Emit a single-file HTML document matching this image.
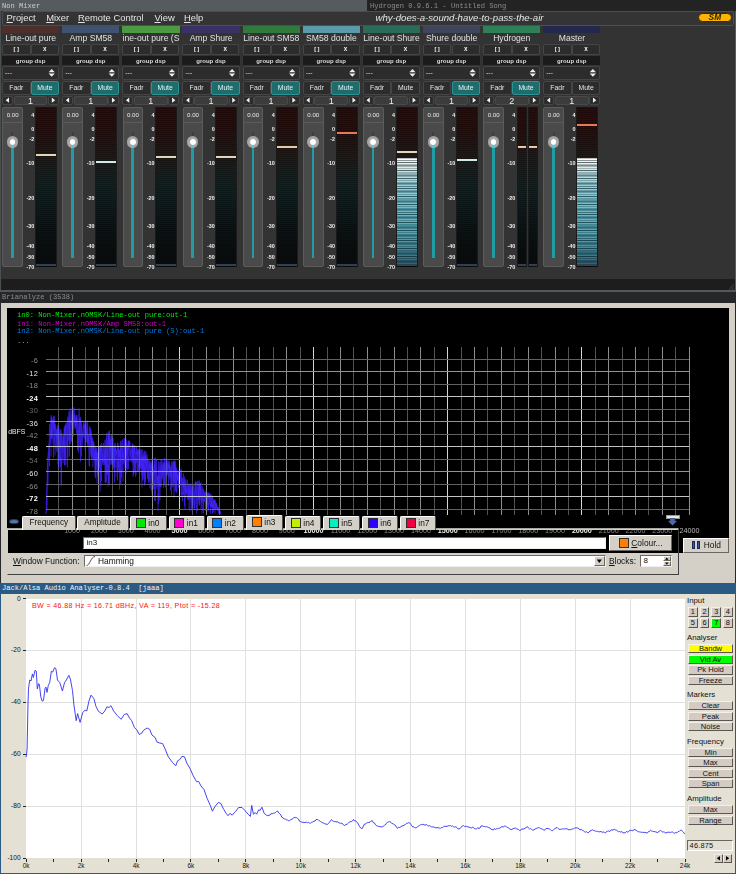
<!DOCTYPE html>
<html><head><meta charset="utf-8"><title>screenshot</title><style>
html,body{margin:0;padding:0;background:#333;}
body{width:736px;height:874px;position:relative;overflow:hidden;font-family:"Liberation Sans",sans-serif;}
div{position:absolute;box-sizing:border-box;white-space:nowrap;}
svg{position:absolute;left:0;top:0;overflow:visible;}
.t{line-height:1;}
.m{font-family:"Liberation Mono",monospace;font-size:7.1px;line-height:1;}
.m2{font-family:"Liberation Mono",monospace;font-size:7.2px;line-height:1;}
.c{text-align:center;line-height:1;overflow:hidden;}
.sb{background:#2c2c2c;border:1px solid #454545;border-radius:2px;}
.jb{background:#d4ccc4;border-top:1px solid #f4f0e8;border-left:1px solid #f4f0e8;border-bottom:1px solid #5a5650;border-right:1px solid #5a5650;text-align:center;font-size:7.6px;line-height:7.5px;color:#111;}
.jl{font-size:7.8px;color:#111;line-height:1;}
.bt{background:#d4d0c8;border-top:1px solid #fff;border-left:1px solid #fff;border-bottom:1px solid #6a6660;border-right:1px solid #6a6660;}
</style></head><body>
<div style="left:0px;top:0px;width:367px;height:11px;background:#565b5d;"></div>
<div style="left:367px;top:0px;width:369px;height:11px;background:#232324;"></div>
<div class="m" style="left:2px;top:2.5px;color:#c9cdd0;">Non Mixer</div>
<div class="m" style="left:370px;top:2.5px;color:#8a8d90;">Hydrogen 0.9.6.1 - Untitled Song</div>
<div style="left:0px;top:11px;width:736px;height:268px;background:#333333;"></div>
<div style="left:0px;top:11px;width:1.4px;height:280px;background:#4a4f52;"></div>
<div style="left:0px;top:279px;width:736px;height:11px;background:#1d1d1d;"></div>
<div style="left:0px;top:279px;width:1.4px;height:12px;background:#4a4f52;"></div>
<div style="left:734.6px;top:11px;width:1.4px;height:280px;background:#545e62;"></div>
<svg width="736" height="300"><path d="M729 289.6 L733.6 284 M731 289.8 L733.8 286.4 M732.8 289.9 L733.9 288.5" stroke="#505050" stroke-width="0.7" fill="none"/></svg>
<div style="left:2px;top:11px;width:732.3px;height:14.6px;background:#343434;border:1px solid #4e4e4e;border-radius:2px;"></div>
<div class="t" style="left:6.5px;top:13.2px;font-size:9.4px;color:#e4e4e4;"><u>P</u>roject</div>
<div class="t" style="left:46.2px;top:13.2px;font-size:9.4px;color:#e4e4e4;"><u>M</u>ixer</div>
<div class="t" style="left:78px;top:13.2px;font-size:9.4px;color:#e4e4e4;"><u>R</u>emote Control</div>
<div class="t" style="left:154.5px;top:13.2px;font-size:9.4px;color:#e4e4e4;"><u>V</u>iew</div>
<div class="t" style="left:184px;top:13.2px;font-size:9.4px;color:#e4e4e4;"><u>H</u>elp</div>
<div class="t" style="left:375.5px;top:13.2px;font-size:9.6px;font-style:italic;color:#e8e8e8;">why-does-a-sound-have-to-pass-the-air</div>
<div style="left:697.7px;top:13.4px;width:34.7px;height:8.7px;background:#fdb400;border-radius:4.5px;border:0.6px solid #3a2a00;font-size:8.3px;font-weight:bold;font-style:italic;color:#2a2200;text-align:center;line-height:7.8px;letter-spacing:0.4px;">SM</div>
<div style="left:2.0px;top:26px;width:57.3px;height:6.8px;background:#4d302b;"></div>
<div class="c" style="left:2.0px;top:33.6px;width:57.5px;height:10px;font-size:8.6px;color:#e2e2e2;">Line-out pure</div>
<div class="sb" style="left:2.0px;top:44px;width:28.5px;height:10.5px;font-size:5.8px;font-weight:bold;color:#f0f0f0;line-height:8.6px;text-align:center;letter-spacing:1.4px;text-indent:1.4px;">[]</div>
<div class="sb" style="left:30.7px;top:44px;width:28.3px;height:10.5px;font-size:6.3px;font-weight:bold;color:#f0f0f0;line-height:8px;text-align:center;">x</div>
<div style="left:2.0px;top:56px;width:57.2px;height:9px;background:#1b1b1b;"></div>
<div class="c" style="left:2.0px;top:56px;width:57.2px;height:9px;font-size:6.05px;font-weight:bold;color:#dcdcdc;line-height:10.3px;">group dsp</div>
<div class="sb" style="left:2.0px;top:66px;width:57.2px;height:14px;"></div>
<div class="t" style="left:5.0px;top:69.1px;font-size:7px;color:#ddd;">---</div>
<svg width="736" height="300"><path d="M48.6 72.2 l3.1 -3.3 l3.1 3.3 z M48.6 73.4 l3.1 3.3 l3.1 -3.3 z" fill="#f0f0f0"/></svg>
<div class="sb" style="left:2.0px;top:81px;width:28.5px;height:14px;font-size:6.85px;color:#e4e4e4;line-height:12px;text-align:center;">Fadr</div>
<div style="left:30.7px;top:81px;width:28.5px;height:14px;background:#1e6c6c;border:1px solid #2a9494;border-radius:2px;font-size:6.85px;color:#e4f4f4;line-height:12px;text-align:center;">Mute</div>
<div class="sb" style="left:2.0px;top:95.7px;width:11.2px;height:9.3px;"></div>
<div style="left:13.7px;top:95.7px;width:33.8px;height:9.3px;background:#3c3c3c;border:1px solid #4a4a4a;border-radius:2px;font-size:9px;color:#eee;line-height:8.5px;text-align:center;">1</div>
<div class="sb" style="left:48.2px;top:95.7px;width:10.8px;height:9.3px;"></div>
<svg width="736" height="300"><path d="M9.0 97.6 l0 5.2 l-3.3 -2.6 z M51.8 97.6 l0 5.2 l3.3 -2.6 z" fill="#f0f0f0"/></svg>
<div style="left:2.3px;top:107px;width:20.6px;height:159.5px;background:#4a4a4a;border:1px solid #5c5c5c;border-radius:2px;"></div>
<div style="left:2.3px;top:107px;width:20.6px;height:16px;background:#4a4a4a;border:1px solid #5c5c5c;border-radius:2px;font-size:6.1px;color:#e8e8e8;line-height:14.5px;text-align:center;">0.00</div>
<div style="left:11.1px;top:144px;width:2.6px;height:114px;background:#1f9ca4;"></div>
<div style="left:11.4px;top:132.2px;width:2px;height:3.6px;background:#3e3e3e;"></div>
<div style="left:6.7px;top:136.4px;width:11.4px;height:11.4px;border-radius:50%;background:radial-gradient(circle,#b4b4b4 0%,#a6a6a6 55%,#8c8c8c 100%);"></div>
<div style="left:11.1px;top:143.5px;width:2.6px;height:4px;background:rgba(90,200,210,0.75);"></div>
<div style="left:9.5px;top:139.2px;width:5.8px;height:5.8px;border-radius:50%;background:radial-gradient(circle,#fff 0%,#fff 60%,rgba(255,255,255,0) 100%);"></div>
<div class="t" style="right:701.7px;top:113.1px;font-size:5.4px;font-weight:bold;color:#f0f0f0;">4</div>
<div class="t" style="right:701.7px;top:126.79999999999998px;font-size:5.4px;font-weight:bold;color:#f0f0f0;">0</div>
<div class="t" style="right:701.7px;top:137.1px;font-size:5.4px;font-weight:bold;color:#f0f0f0;">-2</div>
<div class="t" style="right:701.7px;top:161.1px;font-size:5.4px;font-weight:bold;color:#f0f0f0;">-10</div>
<div class="t" style="right:701.7px;top:196.1px;font-size:5.4px;font-weight:bold;color:#f0f0f0;">-20</div>
<div class="t" style="right:701.7px;top:223.79999999999998px;font-size:5.4px;font-weight:bold;color:#f0f0f0;">-30</div>
<div class="t" style="right:701.7px;top:244.29999999999998px;font-size:5.4px;font-weight:bold;color:#f0f0f0;">-40</div>
<div class="t" style="right:701.7px;top:255.1px;font-size:5.4px;font-weight:bold;color:#f0f0f0;">-50</div>
<div class="t" style="right:701.7px;top:265.1px;font-size:5.4px;font-weight:bold;color:#f0f0f0;">-70</div>
<div style="left:35.0px;top:107px;width:22px;height:159.5px;background:linear-gradient(to bottom,#2c0c0c 0%,#2a0e0e 14%,#241414 22%,#221a18 30%,#1a1e1e 38%,#102222 50%,#0e1c1e 62%,#0c1416 75%,#0a0e0f 90%,#0a0c0d 100%);border-left:1px solid #1a1a1a;border-right:1px solid #1a1a1a;"></div>
<div style="left:36.0px;top:107px;width:20px;height:157px;background:repeating-linear-gradient(to bottom,rgba(0,0,0,0) 0px,rgba(0,0,0,0) 1px,rgba(0,0,0,0.25) 1px,rgba(0,0,0,0.25) 2px);"></div>
<div style="left:36.0px;top:264px;width:20px;height:2px;background:#304050;"></div>
<div style="left:36.0px;top:153.5px;width:20px;height:2px;background:#ddd6b8;"></div>
<div style="left:62.13px;top:26px;width:57.3px;height:6.8px;background:#3f5370;"></div>
<div class="c" style="left:62.13px;top:33.6px;width:57.5px;height:10px;font-size:8.6px;color:#e2e2e2;">Amp SM58</div>
<div class="sb" style="left:62.13px;top:44px;width:28.5px;height:10.5px;font-size:5.8px;font-weight:bold;color:#f0f0f0;line-height:8.6px;text-align:center;letter-spacing:1.4px;text-indent:1.4px;">[]</div>
<div class="sb" style="left:90.83px;top:44px;width:28.3px;height:10.5px;font-size:6.3px;font-weight:bold;color:#f0f0f0;line-height:8px;text-align:center;">x</div>
<div style="left:62.13px;top:56px;width:57.2px;height:9px;background:#1b1b1b;"></div>
<div class="c" style="left:62.13px;top:56px;width:57.2px;height:9px;font-size:6.05px;font-weight:bold;color:#dcdcdc;line-height:10.3px;">group dsp</div>
<div class="sb" style="left:62.13px;top:66px;width:57.2px;height:14px;"></div>
<div class="t" style="left:65.13px;top:69.1px;font-size:7px;color:#ddd;">---</div>
<svg width="736" height="300"><path d="M108.73 72.2 l3.1 -3.3 l3.1 3.3 z M108.73 73.4 l3.1 3.3 l3.1 -3.3 z" fill="#f0f0f0"/></svg>
<div class="sb" style="left:62.13px;top:81px;width:28.5px;height:14px;font-size:6.85px;color:#e4e4e4;line-height:12px;text-align:center;">Fadr</div>
<div style="left:90.83px;top:81px;width:28.5px;height:14px;background:#1e6c6c;border:1px solid #2a9494;border-radius:2px;font-size:6.85px;color:#e4f4f4;line-height:12px;text-align:center;">Mute</div>
<div class="sb" style="left:62.13px;top:95.7px;width:11.2px;height:9.3px;"></div>
<div style="left:73.83px;top:95.7px;width:33.8px;height:9.3px;background:#3c3c3c;border:1px solid #4a4a4a;border-radius:2px;font-size:9px;color:#eee;line-height:8.5px;text-align:center;">1</div>
<div class="sb" style="left:108.33000000000001px;top:95.7px;width:10.8px;height:9.3px;"></div>
<svg width="736" height="300"><path d="M69.13 97.6 l0 5.2 l-3.3 -2.6 z M111.93 97.6 l0 5.2 l3.3 -2.6 z" fill="#f0f0f0"/></svg>
<div style="left:62.43px;top:107px;width:20.6px;height:159.5px;background:#4a4a4a;border:1px solid #5c5c5c;border-radius:2px;"></div>
<div style="left:62.43px;top:107px;width:20.6px;height:16px;background:#4a4a4a;border:1px solid #5c5c5c;border-radius:2px;font-size:6.1px;color:#e8e8e8;line-height:14.5px;text-align:center;">0.00</div>
<div style="left:71.23px;top:144px;width:2.6px;height:114px;background:#1f9ca4;"></div>
<div style="left:71.53px;top:132.2px;width:2px;height:3.6px;background:#3e3e3e;"></div>
<div style="left:66.83px;top:136.4px;width:11.4px;height:11.4px;border-radius:50%;background:radial-gradient(circle,#b4b4b4 0%,#a6a6a6 55%,#8c8c8c 100%);"></div>
<div style="left:71.23px;top:143.5px;width:2.6px;height:4px;background:rgba(90,200,210,0.75);"></div>
<div style="left:69.63px;top:139.2px;width:5.8px;height:5.8px;border-radius:50%;background:radial-gradient(circle,#fff 0%,#fff 60%,rgba(255,255,255,0) 100%);"></div>
<div class="t" style="right:641.5699999999999px;top:113.1px;font-size:5.4px;font-weight:bold;color:#f0f0f0;">4</div>
<div class="t" style="right:641.5699999999999px;top:126.79999999999998px;font-size:5.4px;font-weight:bold;color:#f0f0f0;">0</div>
<div class="t" style="right:641.5699999999999px;top:137.1px;font-size:5.4px;font-weight:bold;color:#f0f0f0;">-2</div>
<div class="t" style="right:641.5699999999999px;top:161.1px;font-size:5.4px;font-weight:bold;color:#f0f0f0;">-10</div>
<div class="t" style="right:641.5699999999999px;top:196.1px;font-size:5.4px;font-weight:bold;color:#f0f0f0;">-20</div>
<div class="t" style="right:641.5699999999999px;top:223.79999999999998px;font-size:5.4px;font-weight:bold;color:#f0f0f0;">-30</div>
<div class="t" style="right:641.5699999999999px;top:244.29999999999998px;font-size:5.4px;font-weight:bold;color:#f0f0f0;">-40</div>
<div class="t" style="right:641.5699999999999px;top:255.1px;font-size:5.4px;font-weight:bold;color:#f0f0f0;">-50</div>
<div class="t" style="right:641.5699999999999px;top:265.1px;font-size:5.4px;font-weight:bold;color:#f0f0f0;">-70</div>
<div style="left:95.13px;top:107px;width:22px;height:159.5px;background:linear-gradient(to bottom,#2c0c0c 0%,#2a0e0e 14%,#241414 22%,#221a18 30%,#1a1e1e 38%,#102222 50%,#0e1c1e 62%,#0c1416 75%,#0a0e0f 90%,#0a0c0d 100%);border-left:1px solid #1a1a1a;border-right:1px solid #1a1a1a;"></div>
<div style="left:96.13px;top:107px;width:20px;height:157px;background:repeating-linear-gradient(to bottom,rgba(0,0,0,0) 0px,rgba(0,0,0,0) 1px,rgba(0,0,0,0.25) 1px,rgba(0,0,0,0.25) 2px);"></div>
<div style="left:96.13px;top:264px;width:20px;height:2px;background:#304050;"></div>
<div style="left:96.13px;top:160.5px;width:20px;height:2px;background:#cfeaea;"></div>
<div style="left:122.26px;top:26px;width:57.3px;height:6.8px;background:#4c9a44;"></div>
<div class="c" style="left:122.26px;top:33.6px;width:57.5px;height:10px;font-size:8.6px;color:#e2e2e2;">ine-out pure (S</div>
<div class="sb" style="left:122.26px;top:44px;width:28.5px;height:10.5px;font-size:5.8px;font-weight:bold;color:#f0f0f0;line-height:8.6px;text-align:center;letter-spacing:1.4px;text-indent:1.4px;">[]</div>
<div class="sb" style="left:150.96px;top:44px;width:28.3px;height:10.5px;font-size:6.3px;font-weight:bold;color:#f0f0f0;line-height:8px;text-align:center;">x</div>
<div style="left:122.26px;top:56px;width:57.2px;height:9px;background:#1b1b1b;"></div>
<div class="c" style="left:122.26px;top:56px;width:57.2px;height:9px;font-size:6.05px;font-weight:bold;color:#dcdcdc;line-height:10.3px;">group dsp</div>
<div class="sb" style="left:122.26px;top:66px;width:57.2px;height:14px;"></div>
<div class="t" style="left:125.26px;top:69.1px;font-size:7px;color:#ddd;">---</div>
<svg width="736" height="300"><path d="M168.86 72.2 l3.1 -3.3 l3.1 3.3 z M168.86 73.4 l3.1 3.3 l3.1 -3.3 z" fill="#f0f0f0"/></svg>
<div class="sb" style="left:122.26px;top:81px;width:28.5px;height:14px;font-size:6.85px;color:#e4e4e4;line-height:12px;text-align:center;">Fadr</div>
<div style="left:150.96px;top:81px;width:28.5px;height:14px;background:#1e6c6c;border:1px solid #2a9494;border-radius:2px;font-size:6.85px;color:#e4f4f4;line-height:12px;text-align:center;">Mute</div>
<div class="sb" style="left:122.26px;top:95.7px;width:11.2px;height:9.3px;"></div>
<div style="left:133.96px;top:95.7px;width:33.8px;height:9.3px;background:#3c3c3c;border:1px solid #4a4a4a;border-radius:2px;font-size:9px;color:#eee;line-height:8.5px;text-align:center;">1</div>
<div class="sb" style="left:168.46px;top:95.7px;width:10.8px;height:9.3px;"></div>
<svg width="736" height="300"><path d="M129.26 97.6 l0 5.2 l-3.3 -2.6 z M172.06 97.6 l0 5.2 l3.3 -2.6 z" fill="#f0f0f0"/></svg>
<div style="left:122.56px;top:107px;width:20.6px;height:159.5px;background:#4a4a4a;border:1px solid #5c5c5c;border-radius:2px;"></div>
<div style="left:122.56px;top:107px;width:20.6px;height:16px;background:#4a4a4a;border:1px solid #5c5c5c;border-radius:2px;font-size:6.1px;color:#e8e8e8;line-height:14.5px;text-align:center;">0.00</div>
<div style="left:131.36px;top:144px;width:2.6px;height:114px;background:#1f9ca4;"></div>
<div style="left:131.66px;top:132.2px;width:2px;height:3.6px;background:#3e3e3e;"></div>
<div style="left:126.96000000000001px;top:136.4px;width:11.4px;height:11.4px;border-radius:50%;background:radial-gradient(circle,#b4b4b4 0%,#a6a6a6 55%,#8c8c8c 100%);"></div>
<div style="left:131.36px;top:143.5px;width:2.6px;height:4px;background:rgba(90,200,210,0.75);"></div>
<div style="left:129.76px;top:139.2px;width:5.8px;height:5.8px;border-radius:50%;background:radial-gradient(circle,#fff 0%,#fff 60%,rgba(255,255,255,0) 100%);"></div>
<div class="t" style="right:581.44px;top:113.1px;font-size:5.4px;font-weight:bold;color:#f0f0f0;">4</div>
<div class="t" style="right:581.44px;top:126.79999999999998px;font-size:5.4px;font-weight:bold;color:#f0f0f0;">0</div>
<div class="t" style="right:581.44px;top:137.1px;font-size:5.4px;font-weight:bold;color:#f0f0f0;">-2</div>
<div class="t" style="right:581.44px;top:161.1px;font-size:5.4px;font-weight:bold;color:#f0f0f0;">-10</div>
<div class="t" style="right:581.44px;top:196.1px;font-size:5.4px;font-weight:bold;color:#f0f0f0;">-20</div>
<div class="t" style="right:581.44px;top:223.79999999999998px;font-size:5.4px;font-weight:bold;color:#f0f0f0;">-30</div>
<div class="t" style="right:581.44px;top:244.29999999999998px;font-size:5.4px;font-weight:bold;color:#f0f0f0;">-40</div>
<div class="t" style="right:581.44px;top:255.1px;font-size:5.4px;font-weight:bold;color:#f0f0f0;">-50</div>
<div class="t" style="right:581.44px;top:265.1px;font-size:5.4px;font-weight:bold;color:#f0f0f0;">-70</div>
<div style="left:155.26px;top:107px;width:22px;height:159.5px;background:linear-gradient(to bottom,#2c0c0c 0%,#2a0e0e 14%,#241414 22%,#221a18 30%,#1a1e1e 38%,#102222 50%,#0e1c1e 62%,#0c1416 75%,#0a0e0f 90%,#0a0c0d 100%);border-left:1px solid #1a1a1a;border-right:1px solid #1a1a1a;"></div>
<div style="left:156.26px;top:107px;width:20px;height:157px;background:repeating-linear-gradient(to bottom,rgba(0,0,0,0) 0px,rgba(0,0,0,0) 1px,rgba(0,0,0,0.25) 1px,rgba(0,0,0,0.25) 2px);"></div>
<div style="left:156.26px;top:264px;width:20px;height:2px;background:#304050;"></div>
<div style="left:156.26px;top:155.5px;width:20px;height:2px;background:#ddd6b8;"></div>
<div style="left:182.39px;top:26px;width:57.3px;height:6.8px;background:#3a3166;"></div>
<div class="c" style="left:182.39px;top:33.6px;width:57.5px;height:10px;font-size:8.6px;color:#e2e2e2;">Amp Shure</div>
<div class="sb" style="left:182.39px;top:44px;width:28.5px;height:10.5px;font-size:5.8px;font-weight:bold;color:#f0f0f0;line-height:8.6px;text-align:center;letter-spacing:1.4px;text-indent:1.4px;">[]</div>
<div class="sb" style="left:211.08999999999997px;top:44px;width:28.3px;height:10.5px;font-size:6.3px;font-weight:bold;color:#f0f0f0;line-height:8px;text-align:center;">x</div>
<div style="left:182.39px;top:56px;width:57.2px;height:9px;background:#1b1b1b;"></div>
<div class="c" style="left:182.39px;top:56px;width:57.2px;height:9px;font-size:6.05px;font-weight:bold;color:#dcdcdc;line-height:10.3px;">group dsp</div>
<div class="sb" style="left:182.39px;top:66px;width:57.2px;height:14px;"></div>
<div class="t" style="left:185.39px;top:69.1px;font-size:7px;color:#ddd;">---</div>
<svg width="736" height="300"><path d="M228.98999999999998 72.2 l3.1 -3.3 l3.1 3.3 z M228.98999999999998 73.4 l3.1 3.3 l3.1 -3.3 z" fill="#f0f0f0"/></svg>
<div class="sb" style="left:182.39px;top:81px;width:28.5px;height:14px;font-size:6.85px;color:#e4e4e4;line-height:12px;text-align:center;">Fadr</div>
<div style="left:211.08999999999997px;top:81px;width:28.5px;height:14px;background:#1e6c6c;border:1px solid #2a9494;border-radius:2px;font-size:6.85px;color:#e4f4f4;line-height:12px;text-align:center;">Mute</div>
<div class="sb" style="left:182.39px;top:95.7px;width:11.2px;height:9.3px;"></div>
<div style="left:194.08999999999997px;top:95.7px;width:33.8px;height:9.3px;background:#3c3c3c;border:1px solid #4a4a4a;border-radius:2px;font-size:9px;color:#eee;line-height:8.5px;text-align:center;">1</div>
<div class="sb" style="left:228.58999999999997px;top:95.7px;width:10.8px;height:9.3px;"></div>
<svg width="736" height="300"><path d="M189.39 97.6 l0 5.2 l-3.3 -2.6 z M232.19 97.6 l0 5.2 l3.3 -2.6 z" fill="#f0f0f0"/></svg>
<div style="left:182.69px;top:107px;width:20.6px;height:159.5px;background:#4a4a4a;border:1px solid #5c5c5c;border-radius:2px;"></div>
<div style="left:182.69px;top:107px;width:20.6px;height:16px;background:#4a4a4a;border:1px solid #5c5c5c;border-radius:2px;font-size:6.1px;color:#e8e8e8;line-height:14.5px;text-align:center;">0.00</div>
<div style="left:191.48999999999998px;top:144px;width:2.6px;height:114px;background:#1f9ca4;"></div>
<div style="left:191.79px;top:132.2px;width:2px;height:3.6px;background:#3e3e3e;"></div>
<div style="left:187.08999999999997px;top:136.4px;width:11.4px;height:11.4px;border-radius:50%;background:radial-gradient(circle,#b4b4b4 0%,#a6a6a6 55%,#8c8c8c 100%);"></div>
<div style="left:191.48999999999998px;top:143.5px;width:2.6px;height:4px;background:rgba(90,200,210,0.75);"></div>
<div style="left:189.89px;top:139.2px;width:5.8px;height:5.8px;border-radius:50%;background:radial-gradient(circle,#fff 0%,#fff 60%,rgba(255,255,255,0) 100%);"></div>
<div class="t" style="right:521.31px;top:113.1px;font-size:5.4px;font-weight:bold;color:#f0f0f0;">4</div>
<div class="t" style="right:521.31px;top:126.79999999999998px;font-size:5.4px;font-weight:bold;color:#f0f0f0;">0</div>
<div class="t" style="right:521.31px;top:137.1px;font-size:5.4px;font-weight:bold;color:#f0f0f0;">-2</div>
<div class="t" style="right:521.31px;top:161.1px;font-size:5.4px;font-weight:bold;color:#f0f0f0;">-10</div>
<div class="t" style="right:521.31px;top:196.1px;font-size:5.4px;font-weight:bold;color:#f0f0f0;">-20</div>
<div class="t" style="right:521.31px;top:223.79999999999998px;font-size:5.4px;font-weight:bold;color:#f0f0f0;">-30</div>
<div class="t" style="right:521.31px;top:244.29999999999998px;font-size:5.4px;font-weight:bold;color:#f0f0f0;">-40</div>
<div class="t" style="right:521.31px;top:255.1px;font-size:5.4px;font-weight:bold;color:#f0f0f0;">-50</div>
<div class="t" style="right:521.31px;top:265.1px;font-size:5.4px;font-weight:bold;color:#f0f0f0;">-70</div>
<div style="left:215.39px;top:107px;width:22px;height:159.5px;background:linear-gradient(to bottom,#2c0c0c 0%,#2a0e0e 14%,#241414 22%,#221a18 30%,#1a1e1e 38%,#102222 50%,#0e1c1e 62%,#0c1416 75%,#0a0e0f 90%,#0a0c0d 100%);border-left:1px solid #1a1a1a;border-right:1px solid #1a1a1a;"></div>
<div style="left:216.39px;top:107px;width:20px;height:157px;background:repeating-linear-gradient(to bottom,rgba(0,0,0,0) 0px,rgba(0,0,0,0) 1px,rgba(0,0,0,0.25) 1px,rgba(0,0,0,0.25) 2px);"></div>
<div style="left:216.39px;top:264px;width:20px;height:2px;background:#304050;"></div>
<div style="left:216.39px;top:156px;width:20px;height:2px;background:#ddd6b8;"></div>
<div style="left:242.52px;top:26px;width:57.3px;height:6.8px;background:#2f7a3c;"></div>
<div class="c" style="left:242.52px;top:33.6px;width:57.5px;height:10px;font-size:8.6px;color:#e2e2e2;">Line-out SM58</div>
<div class="sb" style="left:242.52px;top:44px;width:28.5px;height:10.5px;font-size:5.8px;font-weight:bold;color:#f0f0f0;line-height:8.6px;text-align:center;letter-spacing:1.4px;text-indent:1.4px;">[]</div>
<div class="sb" style="left:271.22px;top:44px;width:28.3px;height:10.5px;font-size:6.3px;font-weight:bold;color:#f0f0f0;line-height:8px;text-align:center;">x</div>
<div style="left:242.52px;top:56px;width:57.2px;height:9px;background:#1b1b1b;"></div>
<div class="c" style="left:242.52px;top:56px;width:57.2px;height:9px;font-size:6.05px;font-weight:bold;color:#dcdcdc;line-height:10.3px;">group dsp</div>
<div class="sb" style="left:242.52px;top:66px;width:57.2px;height:14px;"></div>
<div class="t" style="left:245.52px;top:69.1px;font-size:7px;color:#ddd;">---</div>
<svg width="736" height="300"><path d="M289.12 72.2 l3.1 -3.3 l3.1 3.3 z M289.12 73.4 l3.1 3.3 l3.1 -3.3 z" fill="#f0f0f0"/></svg>
<div class="sb" style="left:242.52px;top:81px;width:28.5px;height:14px;font-size:6.85px;color:#e4e4e4;line-height:12px;text-align:center;">Fadr</div>
<div style="left:271.22px;top:81px;width:28.5px;height:14px;background:#1e6c6c;border:1px solid #2a9494;border-radius:2px;font-size:6.85px;color:#e4f4f4;line-height:12px;text-align:center;">Mute</div>
<div class="sb" style="left:242.52px;top:95.7px;width:11.2px;height:9.3px;"></div>
<div style="left:254.22px;top:95.7px;width:33.8px;height:9.3px;background:#3c3c3c;border:1px solid #4a4a4a;border-radius:2px;font-size:9px;color:#eee;line-height:8.5px;text-align:center;">1</div>
<div class="sb" style="left:288.72px;top:95.7px;width:10.8px;height:9.3px;"></div>
<svg width="736" height="300"><path d="M249.52 97.6 l0 5.2 l-3.3 -2.6 z M292.32 97.6 l0 5.2 l3.3 -2.6 z" fill="#f0f0f0"/></svg>
<div style="left:242.82000000000002px;top:107px;width:20.6px;height:159.5px;background:#4a4a4a;border:1px solid #5c5c5c;border-radius:2px;"></div>
<div style="left:242.82000000000002px;top:107px;width:20.6px;height:16px;background:#4a4a4a;border:1px solid #5c5c5c;border-radius:2px;font-size:6.1px;color:#e8e8e8;line-height:14.5px;text-align:center;">0.00</div>
<div style="left:251.62px;top:144px;width:2.6px;height:114px;background:#1f9ca4;"></div>
<div style="left:251.92000000000002px;top:132.2px;width:2px;height:3.6px;background:#3e3e3e;"></div>
<div style="left:247.22px;top:136.4px;width:11.4px;height:11.4px;border-radius:50%;background:radial-gradient(circle,#b4b4b4 0%,#a6a6a6 55%,#8c8c8c 100%);"></div>
<div style="left:251.62px;top:143.5px;width:2.6px;height:4px;background:rgba(90,200,210,0.75);"></div>
<div style="left:250.02px;top:139.2px;width:5.8px;height:5.8px;border-radius:50%;background:radial-gradient(circle,#fff 0%,#fff 60%,rgba(255,255,255,0) 100%);"></div>
<div class="t" style="right:461.18px;top:113.1px;font-size:5.4px;font-weight:bold;color:#f0f0f0;">4</div>
<div class="t" style="right:461.18px;top:126.79999999999998px;font-size:5.4px;font-weight:bold;color:#f0f0f0;">0</div>
<div class="t" style="right:461.18px;top:137.1px;font-size:5.4px;font-weight:bold;color:#f0f0f0;">-2</div>
<div class="t" style="right:461.18px;top:161.1px;font-size:5.4px;font-weight:bold;color:#f0f0f0;">-10</div>
<div class="t" style="right:461.18px;top:196.1px;font-size:5.4px;font-weight:bold;color:#f0f0f0;">-20</div>
<div class="t" style="right:461.18px;top:223.79999999999998px;font-size:5.4px;font-weight:bold;color:#f0f0f0;">-30</div>
<div class="t" style="right:461.18px;top:244.29999999999998px;font-size:5.4px;font-weight:bold;color:#f0f0f0;">-40</div>
<div class="t" style="right:461.18px;top:255.1px;font-size:5.4px;font-weight:bold;color:#f0f0f0;">-50</div>
<div class="t" style="right:461.18px;top:265.1px;font-size:5.4px;font-weight:bold;color:#f0f0f0;">-70</div>
<div style="left:275.52px;top:107px;width:22px;height:159.5px;background:linear-gradient(to bottom,#2c0c0c 0%,#2a0e0e 14%,#241414 22%,#221a18 30%,#1a1e1e 38%,#102222 50%,#0e1c1e 62%,#0c1416 75%,#0a0e0f 90%,#0a0c0d 100%);border-left:1px solid #1a1a1a;border-right:1px solid #1a1a1a;"></div>
<div style="left:276.52px;top:107px;width:20px;height:157px;background:repeating-linear-gradient(to bottom,rgba(0,0,0,0) 0px,rgba(0,0,0,0) 1px,rgba(0,0,0,0.25) 1px,rgba(0,0,0,0.25) 2px);"></div>
<div style="left:276.52px;top:264px;width:20px;height:2px;background:#304050;"></div>
<div style="left:276.52px;top:146px;width:20px;height:2px;background:#e8c8a0;"></div>
<div style="left:302.65px;top:26px;width:57.3px;height:6.8px;background:#5a9aab;"></div>
<div class="c" style="left:302.65px;top:33.6px;width:57.5px;height:10px;font-size:8.6px;color:#e2e2e2;">SM58 double</div>
<div class="sb" style="left:302.65px;top:44px;width:28.5px;height:10.5px;font-size:5.8px;font-weight:bold;color:#f0f0f0;line-height:8.6px;text-align:center;letter-spacing:1.4px;text-indent:1.4px;">[]</div>
<div class="sb" style="left:331.34999999999997px;top:44px;width:28.3px;height:10.5px;font-size:6.3px;font-weight:bold;color:#f0f0f0;line-height:8px;text-align:center;">x</div>
<div style="left:302.65px;top:56px;width:57.2px;height:9px;background:#1b1b1b;"></div>
<div class="c" style="left:302.65px;top:56px;width:57.2px;height:9px;font-size:6.05px;font-weight:bold;color:#dcdcdc;line-height:10.3px;">group dsp</div>
<div class="sb" style="left:302.65px;top:66px;width:57.2px;height:14px;"></div>
<div class="t" style="left:305.65px;top:69.1px;font-size:7px;color:#ddd;">---</div>
<svg width="736" height="300"><path d="M349.25 72.2 l3.1 -3.3 l3.1 3.3 z M349.25 73.4 l3.1 3.3 l3.1 -3.3 z" fill="#f0f0f0"/></svg>
<div class="sb" style="left:302.65px;top:81px;width:28.5px;height:14px;font-size:6.85px;color:#e4e4e4;line-height:12px;text-align:center;">Fadr</div>
<div style="left:331.34999999999997px;top:81px;width:28.5px;height:14px;background:#1e6c6c;border:1px solid #2a9494;border-radius:2px;font-size:6.85px;color:#e4f4f4;line-height:12px;text-align:center;">Mute</div>
<div class="sb" style="left:302.65px;top:95.7px;width:11.2px;height:9.3px;"></div>
<div style="left:314.34999999999997px;top:95.7px;width:33.8px;height:9.3px;background:#3c3c3c;border:1px solid #4a4a4a;border-radius:2px;font-size:9px;color:#eee;line-height:8.5px;text-align:center;">1</div>
<div class="sb" style="left:348.84999999999997px;top:95.7px;width:10.8px;height:9.3px;"></div>
<svg width="736" height="300"><path d="M309.65 97.6 l0 5.2 l-3.3 -2.6 z M352.45 97.6 l0 5.2 l3.3 -2.6 z" fill="#f0f0f0"/></svg>
<div style="left:302.95px;top:107px;width:20.6px;height:159.5px;background:#4a4a4a;border:1px solid #5c5c5c;border-radius:2px;"></div>
<div style="left:302.95px;top:107px;width:20.6px;height:16px;background:#4a4a4a;border:1px solid #5c5c5c;border-radius:2px;font-size:6.1px;color:#e8e8e8;line-height:14.5px;text-align:center;">0.00</div>
<div style="left:311.75px;top:144px;width:2.6px;height:114px;background:#1f9ca4;"></div>
<div style="left:312.04999999999995px;top:132.2px;width:2px;height:3.6px;background:#3e3e3e;"></div>
<div style="left:307.34999999999997px;top:136.4px;width:11.4px;height:11.4px;border-radius:50%;background:radial-gradient(circle,#b4b4b4 0%,#a6a6a6 55%,#8c8c8c 100%);"></div>
<div style="left:311.75px;top:143.5px;width:2.6px;height:4px;background:rgba(90,200,210,0.75);"></div>
<div style="left:310.15px;top:139.2px;width:5.8px;height:5.8px;border-radius:50%;background:radial-gradient(circle,#fff 0%,#fff 60%,rgba(255,255,255,0) 100%);"></div>
<div class="t" style="right:401.05px;top:113.1px;font-size:5.4px;font-weight:bold;color:#f0f0f0;">4</div>
<div class="t" style="right:401.05px;top:126.79999999999998px;font-size:5.4px;font-weight:bold;color:#f0f0f0;">0</div>
<div class="t" style="right:401.05px;top:137.1px;font-size:5.4px;font-weight:bold;color:#f0f0f0;">-2</div>
<div class="t" style="right:401.05px;top:161.1px;font-size:5.4px;font-weight:bold;color:#f0f0f0;">-10</div>
<div class="t" style="right:401.05px;top:196.1px;font-size:5.4px;font-weight:bold;color:#f0f0f0;">-20</div>
<div class="t" style="right:401.05px;top:223.79999999999998px;font-size:5.4px;font-weight:bold;color:#f0f0f0;">-30</div>
<div class="t" style="right:401.05px;top:244.29999999999998px;font-size:5.4px;font-weight:bold;color:#f0f0f0;">-40</div>
<div class="t" style="right:401.05px;top:255.1px;font-size:5.4px;font-weight:bold;color:#f0f0f0;">-50</div>
<div class="t" style="right:401.05px;top:265.1px;font-size:5.4px;font-weight:bold;color:#f0f0f0;">-70</div>
<div style="left:335.65px;top:107px;width:22px;height:159.5px;background:linear-gradient(to bottom,#2c0c0c 0%,#2a0e0e 14%,#241414 22%,#221a18 30%,#1a1e1e 38%,#102222 50%,#0e1c1e 62%,#0c1416 75%,#0a0e0f 90%,#0a0c0d 100%);border-left:1px solid #1a1a1a;border-right:1px solid #1a1a1a;"></div>
<div style="left:336.65px;top:107px;width:20px;height:157px;background:repeating-linear-gradient(to bottom,rgba(0,0,0,0) 0px,rgba(0,0,0,0) 1px,rgba(0,0,0,0.25) 1px,rgba(0,0,0,0.25) 2px);"></div>
<div style="left:336.65px;top:264px;width:20px;height:2px;background:#304050;"></div>
<div style="left:336.65px;top:131.5px;width:20px;height:2px;background:#e87858;"></div>
<div style="left:362.78px;top:26px;width:57.3px;height:6.8px;background:#2a6b5a;"></div>
<div class="c" style="left:362.78px;top:33.6px;width:57.5px;height:10px;font-size:8.6px;color:#e2e2e2;">Line-out Shure</div>
<div class="sb" style="left:362.78px;top:44px;width:28.5px;height:10.5px;font-size:5.8px;font-weight:bold;color:#f0f0f0;line-height:8.6px;text-align:center;letter-spacing:1.4px;text-indent:1.4px;">[]</div>
<div class="sb" style="left:391.47999999999996px;top:44px;width:28.3px;height:10.5px;font-size:6.3px;font-weight:bold;color:#f0f0f0;line-height:8px;text-align:center;">x</div>
<div style="left:362.78px;top:56px;width:57.2px;height:9px;background:#1b1b1b;"></div>
<div class="c" style="left:362.78px;top:56px;width:57.2px;height:9px;font-size:6.05px;font-weight:bold;color:#dcdcdc;line-height:10.3px;">group dsp</div>
<div class="sb" style="left:362.78px;top:66px;width:57.2px;height:14px;"></div>
<div class="t" style="left:365.78px;top:69.1px;font-size:7px;color:#ddd;">---</div>
<svg width="736" height="300"><path d="M409.38 72.2 l3.1 -3.3 l3.1 3.3 z M409.38 73.4 l3.1 3.3 l3.1 -3.3 z" fill="#f0f0f0"/></svg>
<div class="sb" style="left:362.78px;top:81px;width:28.5px;height:14px;font-size:6.85px;color:#e4e4e4;line-height:12px;text-align:center;">Fadr</div>
<div class="sb" style="left:391.47999999999996px;top:81px;width:28.5px;height:14px;font-size:6.85px;color:#e4e4e4;line-height:12px;text-align:center;">Mute</div>
<div class="sb" style="left:362.78px;top:95.7px;width:11.2px;height:9.3px;"></div>
<div style="left:374.47999999999996px;top:95.7px;width:33.8px;height:9.3px;background:#3c3c3c;border:1px solid #4a4a4a;border-radius:2px;font-size:9px;color:#eee;line-height:8.5px;text-align:center;">1</div>
<div class="sb" style="left:408.97999999999996px;top:95.7px;width:10.8px;height:9.3px;"></div>
<svg width="736" height="300"><path d="M369.78 97.6 l0 5.2 l-3.3 -2.6 z M412.58 97.6 l0 5.2 l3.3 -2.6 z" fill="#f0f0f0"/></svg>
<div style="left:363.08px;top:107px;width:20.6px;height:159.5px;background:#4a4a4a;border:1px solid #5c5c5c;border-radius:2px;"></div>
<div style="left:363.08px;top:107px;width:20.6px;height:16px;background:#4a4a4a;border:1px solid #5c5c5c;border-radius:2px;font-size:6.1px;color:#e8e8e8;line-height:14.5px;text-align:center;">0.00</div>
<div style="left:371.88px;top:144px;width:2.6px;height:114px;background:#1f9ca4;"></div>
<div style="left:372.17999999999995px;top:132.2px;width:2px;height:3.6px;background:#3e3e3e;"></div>
<div style="left:367.47999999999996px;top:136.4px;width:11.4px;height:11.4px;border-radius:50%;background:radial-gradient(circle,#b4b4b4 0%,#a6a6a6 55%,#8c8c8c 100%);"></div>
<div style="left:371.88px;top:143.5px;width:2.6px;height:4px;background:rgba(90,200,210,0.75);"></div>
<div style="left:370.28px;top:139.2px;width:5.8px;height:5.8px;border-radius:50%;background:radial-gradient(circle,#fff 0%,#fff 60%,rgba(255,255,255,0) 100%);"></div>
<div class="t" style="right:340.92px;top:113.1px;font-size:5.4px;font-weight:bold;color:#f0f0f0;">4</div>
<div class="t" style="right:340.92px;top:126.79999999999998px;font-size:5.4px;font-weight:bold;color:#f0f0f0;">0</div>
<div class="t" style="right:340.92px;top:137.1px;font-size:5.4px;font-weight:bold;color:#f0f0f0;">-2</div>
<div class="t" style="right:340.92px;top:161.1px;font-size:5.4px;font-weight:bold;color:#f0f0f0;">-10</div>
<div class="t" style="right:340.92px;top:196.1px;font-size:5.4px;font-weight:bold;color:#f0f0f0;">-20</div>
<div class="t" style="right:340.92px;top:223.79999999999998px;font-size:5.4px;font-weight:bold;color:#f0f0f0;">-30</div>
<div class="t" style="right:340.92px;top:244.29999999999998px;font-size:5.4px;font-weight:bold;color:#f0f0f0;">-40</div>
<div class="t" style="right:340.92px;top:255.1px;font-size:5.4px;font-weight:bold;color:#f0f0f0;">-50</div>
<div class="t" style="right:340.92px;top:265.1px;font-size:5.4px;font-weight:bold;color:#f0f0f0;">-70</div>
<div style="left:395.78px;top:107px;width:22px;height:159.5px;background:linear-gradient(to bottom,#2c0c0c 0%,#2a0e0e 14%,#241414 22%,#221a18 30%,#1a1e1e 38%,#102222 50%,#0e1c1e 62%,#0c1416 75%,#0a0e0f 90%,#0a0c0d 100%);border-left:1px solid #1a1a1a;border-right:1px solid #1a1a1a;"></div>
<div style="left:396.78px;top:158px;width:20px;height:108px;background:linear-gradient(to bottom,#ffffff 0%,#e6f2ee 6%,#bce4ea 14%,#8cd4e2 26%,#66c2d2 45%,#50aabc 68%,#3c8a9e 86%,#2a5e72 100%);"></div>
<div style="left:396.78px;top:158px;width:20px;height:108px;background:repeating-linear-gradient(to bottom,rgba(0,0,0,0) 0px,rgba(0,0,0,0) 1.7px,rgba(10,40,50,0.5) 1.9px,rgba(10,40,50,0.5) 2.4px,rgba(0,0,0,0) 2.6px);"></div>
<div style="left:396.78px;top:107px;width:20px;height:157px;background:repeating-linear-gradient(to bottom,rgba(0,0,0,0) 0px,rgba(0,0,0,0) 1px,rgba(0,0,0,0.25) 1px,rgba(0,0,0,0.25) 2px);"></div>
<div style="left:396.78px;top:264px;width:20px;height:2px;background:#304050;"></div>
<div style="left:396.78px;top:151px;width:20px;height:2px;background:#e0d8b8;"></div>
<div style="left:422.91px;top:26px;width:57.3px;height:6.8px;background:#3f455a;"></div>
<div class="c" style="left:422.91px;top:33.6px;width:57.5px;height:10px;font-size:8.6px;color:#e2e2e2;">Shure double</div>
<div class="sb" style="left:422.91px;top:44px;width:28.5px;height:10.5px;font-size:5.8px;font-weight:bold;color:#f0f0f0;line-height:8.6px;text-align:center;letter-spacing:1.4px;text-indent:1.4px;">[]</div>
<div class="sb" style="left:451.61px;top:44px;width:28.3px;height:10.5px;font-size:6.3px;font-weight:bold;color:#f0f0f0;line-height:8px;text-align:center;">x</div>
<div style="left:422.91px;top:56px;width:57.2px;height:9px;background:#1b1b1b;"></div>
<div class="c" style="left:422.91px;top:56px;width:57.2px;height:9px;font-size:6.05px;font-weight:bold;color:#dcdcdc;line-height:10.3px;">group dsp</div>
<div class="sb" style="left:422.91px;top:66px;width:57.2px;height:14px;"></div>
<div class="t" style="left:425.91px;top:69.1px;font-size:7px;color:#ddd;">---</div>
<svg width="736" height="300"><path d="M469.51000000000005 72.2 l3.1 -3.3 l3.1 3.3 z M469.51000000000005 73.4 l3.1 3.3 l3.1 -3.3 z" fill="#f0f0f0"/></svg>
<div class="sb" style="left:422.91px;top:81px;width:28.5px;height:14px;font-size:6.85px;color:#e4e4e4;line-height:12px;text-align:center;">Fadr</div>
<div style="left:451.61px;top:81px;width:28.5px;height:14px;background:#1e6c6c;border:1px solid #2a9494;border-radius:2px;font-size:6.85px;color:#e4f4f4;line-height:12px;text-align:center;">Mute</div>
<div class="sb" style="left:422.91px;top:95.7px;width:11.2px;height:9.3px;"></div>
<div style="left:434.61px;top:95.7px;width:33.8px;height:9.3px;background:#3c3c3c;border:1px solid #4a4a4a;border-radius:2px;font-size:9px;color:#eee;line-height:8.5px;text-align:center;">1</div>
<div class="sb" style="left:469.11px;top:95.7px;width:10.8px;height:9.3px;"></div>
<svg width="736" height="300"><path d="M429.91 97.6 l0 5.2 l-3.3 -2.6 z M472.71000000000004 97.6 l0 5.2 l3.3 -2.6 z" fill="#f0f0f0"/></svg>
<div style="left:423.21000000000004px;top:107px;width:20.6px;height:159.5px;background:#4a4a4a;border:1px solid #5c5c5c;border-radius:2px;"></div>
<div style="left:423.21000000000004px;top:107px;width:20.6px;height:16px;background:#4a4a4a;border:1px solid #5c5c5c;border-radius:2px;font-size:6.1px;color:#e8e8e8;line-height:14.5px;text-align:center;">0.00</div>
<div style="left:432.01000000000005px;top:144px;width:2.6px;height:114px;background:#1f9ca4;"></div>
<div style="left:432.31px;top:132.2px;width:2px;height:3.6px;background:#3e3e3e;"></div>
<div style="left:427.61px;top:136.4px;width:11.4px;height:11.4px;border-radius:50%;background:radial-gradient(circle,#b4b4b4 0%,#a6a6a6 55%,#8c8c8c 100%);"></div>
<div style="left:432.01000000000005px;top:143.5px;width:2.6px;height:4px;background:rgba(90,200,210,0.75);"></div>
<div style="left:430.41px;top:139.2px;width:5.8px;height:5.8px;border-radius:50%;background:radial-gradient(circle,#fff 0%,#fff 60%,rgba(255,255,255,0) 100%);"></div>
<div class="t" style="right:280.78999999999996px;top:113.1px;font-size:5.4px;font-weight:bold;color:#f0f0f0;">4</div>
<div class="t" style="right:280.78999999999996px;top:126.79999999999998px;font-size:5.4px;font-weight:bold;color:#f0f0f0;">0</div>
<div class="t" style="right:280.78999999999996px;top:137.1px;font-size:5.4px;font-weight:bold;color:#f0f0f0;">-2</div>
<div class="t" style="right:280.78999999999996px;top:161.1px;font-size:5.4px;font-weight:bold;color:#f0f0f0;">-10</div>
<div class="t" style="right:280.78999999999996px;top:196.1px;font-size:5.4px;font-weight:bold;color:#f0f0f0;">-20</div>
<div class="t" style="right:280.78999999999996px;top:223.79999999999998px;font-size:5.4px;font-weight:bold;color:#f0f0f0;">-30</div>
<div class="t" style="right:280.78999999999996px;top:244.29999999999998px;font-size:5.4px;font-weight:bold;color:#f0f0f0;">-40</div>
<div class="t" style="right:280.78999999999996px;top:255.1px;font-size:5.4px;font-weight:bold;color:#f0f0f0;">-50</div>
<div class="t" style="right:280.78999999999996px;top:265.1px;font-size:5.4px;font-weight:bold;color:#f0f0f0;">-70</div>
<div style="left:455.91px;top:107px;width:22px;height:159.5px;background:linear-gradient(to bottom,#2c0c0c 0%,#2a0e0e 14%,#241414 22%,#221a18 30%,#1a1e1e 38%,#102222 50%,#0e1c1e 62%,#0c1416 75%,#0a0e0f 90%,#0a0c0d 100%);border-left:1px solid #1a1a1a;border-right:1px solid #1a1a1a;"></div>
<div style="left:456.91px;top:107px;width:20px;height:157px;background:repeating-linear-gradient(to bottom,rgba(0,0,0,0) 0px,rgba(0,0,0,0) 1px,rgba(0,0,0,0.25) 1px,rgba(0,0,0,0.25) 2px);"></div>
<div style="left:456.91px;top:264px;width:20px;height:2px;background:#304050;"></div>
<div style="left:456.91px;top:158.5px;width:20px;height:2px;background:#cfeaea;"></div>
<div style="left:483.04px;top:26px;width:57.3px;height:6.8px;background:#2e8058;"></div>
<div class="c" style="left:483.04px;top:33.6px;width:57.5px;height:10px;font-size:8.6px;color:#e2e2e2;">Hydrogen</div>
<div class="sb" style="left:483.04px;top:44px;width:28.5px;height:10.5px;font-size:5.8px;font-weight:bold;color:#f0f0f0;line-height:8.6px;text-align:center;letter-spacing:1.4px;text-indent:1.4px;">[]</div>
<div class="sb" style="left:511.74px;top:44px;width:28.3px;height:10.5px;font-size:6.3px;font-weight:bold;color:#f0f0f0;line-height:8px;text-align:center;">x</div>
<div style="left:483.04px;top:56px;width:57.2px;height:9px;background:#1b1b1b;"></div>
<div class="c" style="left:483.04px;top:56px;width:57.2px;height:9px;font-size:6.05px;font-weight:bold;color:#dcdcdc;line-height:10.3px;">group dsp</div>
<div class="sb" style="left:483.04px;top:66px;width:57.2px;height:14px;"></div>
<div class="t" style="left:486.04px;top:69.1px;font-size:7px;color:#ddd;">---</div>
<svg width="736" height="300"><path d="M529.64 72.2 l3.1 -3.3 l3.1 3.3 z M529.64 73.4 l3.1 3.3 l3.1 -3.3 z" fill="#f0f0f0"/></svg>
<div class="sb" style="left:483.04px;top:81px;width:28.5px;height:14px;font-size:6.85px;color:#e4e4e4;line-height:12px;text-align:center;">Fadr</div>
<div style="left:511.74px;top:81px;width:28.5px;height:14px;background:#1e6c6c;border:1px solid #2a9494;border-radius:2px;font-size:6.85px;color:#e4f4f4;line-height:12px;text-align:center;">Mute</div>
<div class="sb" style="left:483.04px;top:95.7px;width:11.2px;height:9.3px;"></div>
<div style="left:494.74px;top:95.7px;width:33.8px;height:9.3px;background:#3c3c3c;border:1px solid #4a4a4a;border-radius:2px;font-size:9px;color:#eee;line-height:8.5px;text-align:center;">2</div>
<div class="sb" style="left:529.24px;top:95.7px;width:10.8px;height:9.3px;"></div>
<svg width="736" height="300"><path d="M490.04 97.6 l0 5.2 l-3.3 -2.6 z M532.84 97.6 l0 5.2 l3.3 -2.6 z" fill="#f0f0f0"/></svg>
<div style="left:483.34000000000003px;top:107px;width:20.6px;height:159.5px;background:#4a4a4a;border:1px solid #5c5c5c;border-radius:2px;"></div>
<div style="left:483.34000000000003px;top:107px;width:20.6px;height:16px;background:#4a4a4a;border:1px solid #5c5c5c;border-radius:2px;font-size:6.1px;color:#e8e8e8;line-height:14.5px;text-align:center;">0.00</div>
<div style="left:492.14000000000004px;top:144px;width:2.6px;height:114px;background:#1f9ca4;"></div>
<div style="left:492.44px;top:132.2px;width:2px;height:3.6px;background:#3e3e3e;"></div>
<div style="left:487.74px;top:136.4px;width:11.4px;height:11.4px;border-radius:50%;background:radial-gradient(circle,#b4b4b4 0%,#a6a6a6 55%,#8c8c8c 100%);"></div>
<div style="left:492.14000000000004px;top:143.5px;width:2.6px;height:4px;background:rgba(90,200,210,0.75);"></div>
<div style="left:490.54px;top:139.2px;width:5.8px;height:5.8px;border-radius:50%;background:radial-gradient(circle,#fff 0%,#fff 60%,rgba(255,255,255,0) 100%);"></div>
<div class="t" style="right:220.65999999999997px;top:113.1px;font-size:5.4px;font-weight:bold;color:#f0f0f0;">4</div>
<div class="t" style="right:220.65999999999997px;top:126.79999999999998px;font-size:5.4px;font-weight:bold;color:#f0f0f0;">0</div>
<div class="t" style="right:220.65999999999997px;top:137.1px;font-size:5.4px;font-weight:bold;color:#f0f0f0;">-2</div>
<div class="t" style="right:220.65999999999997px;top:161.1px;font-size:5.4px;font-weight:bold;color:#f0f0f0;">-10</div>
<div class="t" style="right:220.65999999999997px;top:196.1px;font-size:5.4px;font-weight:bold;color:#f0f0f0;">-20</div>
<div class="t" style="right:220.65999999999997px;top:223.79999999999998px;font-size:5.4px;font-weight:bold;color:#f0f0f0;">-30</div>
<div class="t" style="right:220.65999999999997px;top:244.29999999999998px;font-size:5.4px;font-weight:bold;color:#f0f0f0;">-40</div>
<div class="t" style="right:220.65999999999997px;top:255.1px;font-size:5.4px;font-weight:bold;color:#f0f0f0;">-50</div>
<div class="t" style="right:220.65999999999997px;top:265.1px;font-size:5.4px;font-weight:bold;color:#f0f0f0;">-70</div>
<div style="left:516.64px;top:107px;width:10px;height:159.5px;background:linear-gradient(to bottom,#2c0c0c 0%,#2a0e0e 14%,#241414 22%,#221a18 30%,#1a1e1e 38%,#102222 50%,#0e1c1e 62%,#0c1416 75%,#0a0e0f 90%,#0a0c0d 100%);border-left:1px solid #1a1a1a;border-right:1px solid #1a1a1a;"></div>
<div style="left:517.64px;top:107px;width:8px;height:157px;background:repeating-linear-gradient(to bottom,rgba(0,0,0,0) 0px,rgba(0,0,0,0) 1px,rgba(0,0,0,0.25) 1px,rgba(0,0,0,0.25) 2px);"></div>
<div style="left:517.64px;top:264px;width:8px;height:2px;background:#304050;"></div>
<div style="left:517.64px;top:146px;width:8px;height:2px;background:#e8c8a0;"></div>
<div style="left:528.24px;top:107px;width:10px;height:159.5px;background:linear-gradient(to bottom,#2c0c0c 0%,#2a0e0e 14%,#241414 22%,#221a18 30%,#1a1e1e 38%,#102222 50%,#0e1c1e 62%,#0c1416 75%,#0a0e0f 90%,#0a0c0d 100%);border-left:1px solid #1a1a1a;border-right:1px solid #1a1a1a;"></div>
<div style="left:529.24px;top:107px;width:8px;height:157px;background:repeating-linear-gradient(to bottom,rgba(0,0,0,0) 0px,rgba(0,0,0,0) 1px,rgba(0,0,0,0.25) 1px,rgba(0,0,0,0.25) 2px);"></div>
<div style="left:529.24px;top:264px;width:8px;height:2px;background:#304050;"></div>
<div style="left:529.24px;top:146px;width:8px;height:2px;background:#e8c8a0;"></div>
<div style="left:543.17px;top:26px;width:57.3px;height:6.8px;background:#24284e;"></div>
<div class="c" style="left:543.17px;top:33.6px;width:57.5px;height:10px;font-size:8.6px;color:#e2e2e2;">Master</div>
<div class="sb" style="left:543.17px;top:44px;width:28.5px;height:10.5px;font-size:5.8px;font-weight:bold;color:#f0f0f0;line-height:8.6px;text-align:center;letter-spacing:1.4px;text-indent:1.4px;">[]</div>
<div class="sb" style="left:571.87px;top:44px;width:28.3px;height:10.5px;font-size:6.3px;font-weight:bold;color:#f0f0f0;line-height:8px;text-align:center;">x</div>
<div style="left:543.17px;top:56px;width:57.2px;height:9px;background:#1b1b1b;"></div>
<div class="c" style="left:543.17px;top:56px;width:57.2px;height:9px;font-size:6.05px;font-weight:bold;color:#dcdcdc;line-height:10.3px;">group dsp</div>
<div class="sb" style="left:543.17px;top:66px;width:57.2px;height:14px;"></div>
<div class="t" style="left:546.17px;top:69.1px;font-size:7px;color:#ddd;">---</div>
<svg width="736" height="300"><path d="M589.77 72.2 l3.1 -3.3 l3.1 3.3 z M589.77 73.4 l3.1 3.3 l3.1 -3.3 z" fill="#f0f0f0"/></svg>
<div class="sb" style="left:543.17px;top:81px;width:28.5px;height:14px;font-size:6.85px;color:#e4e4e4;line-height:12px;text-align:center;">Fadr</div>
<div class="sb" style="left:571.87px;top:81px;width:28.5px;height:14px;font-size:6.85px;color:#e4e4e4;line-height:12px;text-align:center;">Mute</div>
<div class="sb" style="left:543.17px;top:95.7px;width:11.2px;height:9.3px;"></div>
<div style="left:554.87px;top:95.7px;width:33.8px;height:9.3px;background:#3c3c3c;border:1px solid #4a4a4a;border-radius:2px;font-size:9px;color:#eee;line-height:8.5px;text-align:center;">1</div>
<div class="sb" style="left:589.37px;top:95.7px;width:10.8px;height:9.3px;"></div>
<svg width="736" height="300"><path d="M550.17 97.6 l0 5.2 l-3.3 -2.6 z M592.9699999999999 97.6 l0 5.2 l3.3 -2.6 z" fill="#f0f0f0"/></svg>
<div style="left:543.4699999999999px;top:107px;width:20.6px;height:159.5px;background:#4a4a4a;border:1px solid #5c5c5c;border-radius:2px;"></div>
<div style="left:543.4699999999999px;top:107px;width:20.6px;height:16px;background:#4a4a4a;border:1px solid #5c5c5c;border-radius:2px;font-size:6.1px;color:#e8e8e8;line-height:14.5px;text-align:center;">0.00</div>
<div style="left:552.27px;top:144px;width:2.6px;height:114px;background:#1f9ca4;"></div>
<div style="left:552.5699999999999px;top:132.2px;width:2px;height:3.6px;background:#3e3e3e;"></div>
<div style="left:547.87px;top:136.4px;width:11.4px;height:11.4px;border-radius:50%;background:radial-gradient(circle,#b4b4b4 0%,#a6a6a6 55%,#8c8c8c 100%);"></div>
<div style="left:552.27px;top:143.5px;width:2.6px;height:4px;background:rgba(90,200,210,0.75);"></div>
<div style="left:550.67px;top:139.2px;width:5.8px;height:5.8px;border-radius:50%;background:radial-gradient(circle,#fff 0%,#fff 60%,rgba(255,255,255,0) 100%);"></div>
<div class="t" style="right:160.5300000000001px;top:113.1px;font-size:5.4px;font-weight:bold;color:#f0f0f0;">4</div>
<div class="t" style="right:160.5300000000001px;top:126.79999999999998px;font-size:5.4px;font-weight:bold;color:#f0f0f0;">0</div>
<div class="t" style="right:160.5300000000001px;top:137.1px;font-size:5.4px;font-weight:bold;color:#f0f0f0;">-2</div>
<div class="t" style="right:160.5300000000001px;top:161.1px;font-size:5.4px;font-weight:bold;color:#f0f0f0;">-10</div>
<div class="t" style="right:160.5300000000001px;top:196.1px;font-size:5.4px;font-weight:bold;color:#f0f0f0;">-20</div>
<div class="t" style="right:160.5300000000001px;top:223.79999999999998px;font-size:5.4px;font-weight:bold;color:#f0f0f0;">-30</div>
<div class="t" style="right:160.5300000000001px;top:244.29999999999998px;font-size:5.4px;font-weight:bold;color:#f0f0f0;">-40</div>
<div class="t" style="right:160.5300000000001px;top:255.1px;font-size:5.4px;font-weight:bold;color:#f0f0f0;">-50</div>
<div class="t" style="right:160.5300000000001px;top:265.1px;font-size:5.4px;font-weight:bold;color:#f0f0f0;">-70</div>
<div style="left:576.17px;top:107px;width:22px;height:159.5px;background:linear-gradient(to bottom,#2c0c0c 0%,#2a0e0e 14%,#241414 22%,#221a18 30%,#1a1e1e 38%,#102222 50%,#0e1c1e 62%,#0c1416 75%,#0a0e0f 90%,#0a0c0d 100%);border-left:1px solid #1a1a1a;border-right:1px solid #1a1a1a;"></div>
<div style="left:577.17px;top:158px;width:20px;height:108px;background:linear-gradient(to bottom,#ffffff 0%,#e6f2ee 6%,#bce4ea 14%,#8cd4e2 26%,#66c2d2 45%,#50aabc 68%,#3c8a9e 86%,#2a5e72 100%);"></div>
<div style="left:577.17px;top:158px;width:20px;height:108px;background:repeating-linear-gradient(to bottom,rgba(0,0,0,0) 0px,rgba(0,0,0,0) 1.7px,rgba(10,40,50,0.5) 1.9px,rgba(10,40,50,0.5) 2.4px,rgba(0,0,0,0) 2.6px);"></div>
<div style="left:577.17px;top:107px;width:20px;height:157px;background:repeating-linear-gradient(to bottom,rgba(0,0,0,0) 0px,rgba(0,0,0,0) 1px,rgba(0,0,0,0.25) 1px,rgba(0,0,0,0.25) 2px);"></div>
<div style="left:577.17px;top:264px;width:20px;height:2px;background:#304050;"></div>
<div style="left:577.17px;top:124px;width:20px;height:2px;background:#e87858;"></div>
<div style="left:0px;top:290.3px;width:736px;height:1.7px;background:#4f585c;"></div>
<div style="left:0px;top:292px;width:736px;height:10.6px;background:#262728;"></div>
<div class="m" style="left:2px;top:293.5px;color:#8a8d90;">Brianalyze (3538)</div>
<div style="left:0px;top:302.6px;width:736px;height:280px;background:#d4d0c8;"></div>
<div style="left:0px;top:302px;width:1.4px;height:281px;background:#262728;"></div>
<div style="left:734.9px;top:302px;width:1.1px;height:281px;background:#262728;"></div>
<div style="left:7px;top:308px;width:722px;height:244.5px;background:#000;"></div>
<div class="m" style="left:17px;top:311.8px;color:#00ee00;">in0: Non-Mixer.nOMSK/Line-out pure:out-1</div>
<div class="m" style="left:17px;top:320.8px;color:#d000c8;">in1: Non-Mixer.nOMSK/Amp SM58:out-1</div>
<div class="m" style="left:17px;top:328.3px;color:#0078e0;">in2: Non-Mixer.nOMSK/Line-out pure (S):out-1</div>
<div class="m" style="left:17px;top:338px;color:#aaa;">...</div>
<svg width="736" height="874"><path d="M46.0 513.1 L46.5 496.5 L47.0 480.0 L47.5 460.1 L48.0 454.1 L48.5 449.8 L49.0 442.2 L49.5 424.0 L50.0 432.4 L50.5 425.3 L51.0 415.1 L51.5 417.9 L52.0 417.8 L52.5 422.7 L53.0 418.3 L53.5 415.7 L54.0 425.9 L54.5 416.5 L55.0 423.5 L55.5 425.0 L56.0 432.1 L56.5 428.7 L57.0 429.5 L57.5 425.1 L58.0 425.0 L58.5 425.7 L59.0 429.1 L59.5 432.9 L60.0 443.3 L60.5 431.0 L61.0 429.3 L61.5 434.5 L62.0 433.5 L62.5 446.4 L63.0 435.1 L63.5 437.6 L64.0 429.0 L64.5 425.9 L65.0 426.9 L65.5 423.5 L66.0 428.6 L66.5 422.6 L67.0 438.2 L67.5 416.8 L68.0 430.1 L68.5 419.2 L69.0 411.5 L69.5 424.6 L70.0 408.5 L70.5 418.0 L71.0 422.7 L71.5 416.7 L72.0 408.1 L72.5 407.4 L73.0 409.2 L73.5 417.8 L74.0 407.4 L74.5 417.0 L75.0 414.6 L75.5 420.6 L76.0 417.3 L76.5 415.1 L77.0 414.8 L77.5 419.8 L78.0 425.0 L78.5 427.7 L79.0 408.4 L79.5 419.6 L80.0 417.5 L80.5 417.3 L81.0 425.1 L81.5 422.4 L82.0 429.4 L82.5 434.8 L83.0 426.7 L83.5 422.9 L84.0 422.0 L84.5 424.7 L85.0 424.2 L85.5 420.2 L86.0 422.7 L86.5 431.8 L87.0 421.8 L87.5 420.5 L88.0 433.4 L88.5 435.1 L89.0 436.8 L89.5 426.2 L90.0 432.6 L90.5 427.9 L91.0 430.3 L91.5 433.2 L92.0 438.3 L92.5 437.9 L93.0 441.5 L93.5 441.2 L94.0 442.3 L94.5 446.9 L95.0 452.8 L95.5 445.9 L96.0 449.4 L96.5 447.7 L97.0 451.3 L97.5 453.5 L98.0 452.4 L98.5 445.8 L99.0 447.5 L99.5 446.5 L100.0 446.1 L100.5 445.1 L101.0 445.3 L101.5 443.1 L102.0 447.8 L102.5 456.8 L103.0 444.4 L103.5 443.2 L104.0 455.4 L104.5 447.2 L105.0 439.7 L105.5 446.7 L106.0 449.2 L106.5 435.4 L107.0 433.0 L107.5 453.0 L108.0 432.3 L108.5 435.6 L109.0 430.7 L109.5 431.0 L110.0 438.7 L110.5 440.7 L111.0 435.1 L111.5 433.8 L112.0 434.7 L112.5 443.0 L113.0 437.7 L113.5 450.7 L114.0 445.8 L114.5 448.5 L115.0 442.8 L115.5 446.2 L116.0 449.2 L116.5 451.2 L117.0 449.4 L117.5 442.9 L118.0 442.8 L118.5 446.4 L119.0 450.6 L119.5 449.5 L120.0 452.3 L120.5 440.8 L121.0 449.8 L121.5 444.3 L122.0 440.7 L122.5 439.5 L123.0 455.5 L123.5 453.9 L124.0 438.3 L124.5 437.8 L125.0 449.8 L125.5 441.1 L126.0 440.9 L126.5 439.6 L127.0 448.3 L127.5 445.7 L128.0 441.3 L128.5 441.3 L129.0 440.3 L129.5 441.3 L130.0 441.4 L130.5 449.7 L131.0 451.2 L131.5 448.4 L132.0 445.2 L132.5 444.1 L133.0 443.6 L133.5 451.7 L134.0 445.6 L134.5 445.0 L135.0 448.4 L135.5 458.2 L136.0 446.1 L136.5 447.2 L137.0 452.8 L137.5 450.1 L138.0 448.7 L138.5 452.3 L139.0 449.7 L139.5 459.9 L140.0 450.0 L140.5 460.4 L141.0 449.0 L141.5 459.5 L142.0 449.1 L142.5 456.9 L143.0 456.9 L143.5 454.8 L144.0 450.5 L144.5 451.5 L145.0 457.8 L145.5 455.6 L146.0 451.2 L146.5 462.8 L147.0 454.5 L147.5 458.9 L148.0 459.8 L148.5 465.8 L149.0 459.4 L149.5 465.0 L150.0 461.1 L150.5 466.7 L151.0 462.2 L151.5 464.7 L152.0 458.7 L152.5 457.6 L153.0 469.6 L153.5 471.2 L154.0 465.8 L154.5 459.3 L155.0 457.5 L155.5 458.5 L156.0 471.4 L156.5 459.8 L157.0 476.6 L157.5 476.8 L158.0 474.9 L158.5 461.6 L159.0 478.1 L159.5 468.2 L160.0 461.9 L160.5 474.8 L161.0 459.0 L161.5 473.3 L162.0 459.0 L162.5 470.0 L163.0 464.8 L163.5 462.3 L164.0 465.2 L164.5 458.1 L165.0 458.6 L165.5 469.0 L166.0 460.0 L166.5 458.3 L167.0 463.3 L167.5 463.6 L168.0 460.4 L168.5 465.9 L169.0 461.0 L169.5 462.6 L170.0 465.0 L170.5 467.1 L171.0 470.5 L171.5 461.4 L172.0 475.1 L172.5 463.1 L173.0 461.9 L173.5 460.8 L174.0 461.1 L174.5 461.2 L175.0 460.6 L175.5 462.1 L176.0 467.1 L176.5 468.4 L177.0 471.6 L177.5 476.6 L178.0 471.0 L178.5 478.3 L179.0 469.9 L179.5 471.0 L180.0 477.1 L180.5 472.1 L181.0 468.6 L181.5 471.4 L182.0 479.0 L182.5 478.0 L183.0 482.7 L183.5 473.0 L184.0 485.1 L184.5 476.7 L185.0 487.2 L185.5 480.4 L186.0 478.9 L186.5 489.6 L187.0 487.0 L187.5 479.9 L188.0 485.3 L188.5 485.2 L189.0 483.9 L189.5 485.0 L190.0 490.2 L190.5 483.3 L191.0 483.9 L191.5 484.4 L192.0 492.0 L192.5 486.2 L193.0 495.9 L193.5 484.0 L194.0 494.3 L194.5 493.4 L195.0 482.3 L195.5 481.8 L196.0 481.6 L196.5 482.2 L197.0 492.4 L197.5 481.0 L198.0 485.9 L198.5 484.5 L199.0 480.4 L199.5 482.2 L200.0 484.5 L200.5 483.8 L201.0 482.5 L201.5 495.5 L202.0 486.1 L202.5 490.5 L203.0 496.0 L203.5 488.8 L204.0 491.2 L204.5 493.5 L205.0 492.6 L205.5 491.3 L206.0 498.0 L206.5 491.9 L207.0 494.3 L207.5 493.5 L208.0 492.5 L208.5 493.8 L209.0 492.8 L209.5 493.3 L210.0 495.6 L210.5 494.1 L211.0 500.5 L211.5 494.6 L212.0 496.6 L212.5 496.2 L213.0 497.4 L213.5 502.2 L214.0 499.5 L214.5 499.6 L215.0 500.3 L215.5 501.1 L216.0 504.4 L216.5 503.0 L217.0 505.0 L217.5 507.9 L218.0 506.8 L218.5 508.1 L219.0 508.9 L219.5 509.5 L220.0 511.1 L220.5 512.9 L221.0 514.4 L221.0 514.5 L220.5 513.9 L220.0 512.4 L219.5 511.4 L219.0 510.7 L218.5 510.9 L218.0 511.1 L217.5 509.7 L217.0 510.0 L216.5 508.2 L216.0 508.1 L215.5 509.3 L215.0 509.6 L214.5 508.3 L214.0 508.6 L213.5 508.0 L213.0 507.8 L212.5 504.0 L212.0 507.2 L211.5 507.7 L211.0 507.2 L210.5 504.2 L210.0 506.1 L209.5 503.1 L209.0 505.2 L208.5 503.0 L208.0 507.2 L207.5 507.4 L207.0 503.3 L206.5 500.9 L206.0 506.1 L205.5 501.6 L205.0 501.3 L204.5 501.7 L204.0 501.7 L203.5 499.4 L203.0 499.7 L202.5 501.5 L202.0 497.2 L201.5 501.8 L201.0 503.5 L200.5 496.7 L200.0 498.0 L199.5 502.5 L199.0 504.5 L198.5 500.3 L198.0 498.2 L197.5 502.5 L197.0 501.5 L196.5 495.2 L196.0 497.5 L195.5 500.0 L195.0 504.0 L194.5 496.3 L194.0 504.5 L193.5 505.3 L193.0 503.2 L192.5 505.3 L192.0 501.6 L191.5 502.5 L191.0 500.5 L190.5 497.3 L190.0 500.1 L189.5 497.6 L189.0 499.3 L188.5 498.9 L188.0 497.4 L187.5 499.9 L187.0 493.7 L186.5 493.3 L186.0 494.8 L185.5 496.9 L185.0 499.4 L184.5 497.3 L184.0 494.1 L183.5 495.3 L183.0 494.1 L182.5 492.4 L182.0 482.5 L181.5 482.4 L181.0 486.1 L180.5 485.6 L180.0 483.5 L179.5 485.6 L179.0 479.2 L178.5 481.1 L178.0 480.9 L177.5 480.0 L177.0 480.5 L176.5 482.3 L176.0 477.0 L175.5 479.0 L175.0 475.5 L174.5 482.7 L174.0 480.8 L173.5 484.1 L173.0 487.1 L172.5 487.1 L172.0 483.0 L171.5 479.1 L171.0 483.8 L170.5 484.2 L170.0 476.4 L169.5 476.7 L169.0 479.6 L168.5 472.8 L168.0 474.5 L167.5 471.0 L167.0 476.1 L166.5 473.4 L166.0 476.0 L165.5 472.3 L165.0 479.2 L164.5 471.1 L164.0 471.5 L163.5 474.1 L163.0 479.3 L162.5 474.6 L162.0 478.9 L161.5 487.1 L161.0 480.1 L160.5 487.3 L160.0 484.1 L159.5 485.7 L159.0 488.7 L158.5 497.0 L158.0 493.9 L157.5 482.0 L157.0 483.2 L156.5 486.0 L156.0 489.7 L155.5 490.5 L155.0 480.2 L154.5 480.4 L154.0 474.9 L153.5 478.4 L153.0 482.9 L152.5 478.3 L152.0 484.4 L151.5 483.2 L151.0 474.7 L150.5 475.3 L150.0 479.3 L149.5 475.1 L149.0 475.2 L148.5 469.9 L148.0 470.1 L147.5 467.8 L147.0 465.7 L146.5 470.3 L146.0 468.1 L145.5 469.9 L145.0 467.7 L144.5 468.6 L144.0 479.6 L143.5 468.9 L143.0 480.1 L142.5 480.6 L142.0 467.7 L141.5 475.8 L141.0 469.0 L140.5 468.6 L140.0 463.2 L139.5 468.8 L139.0 463.3 L138.5 464.9 L138.0 463.6 L137.5 460.3 L137.0 461.1 L136.5 463.0 L136.0 461.7 L135.5 463.3 L135.0 461.5 L134.5 461.4 L134.0 466.4 L133.5 469.6 L133.0 462.8 L132.5 457.3 L132.0 462.9 L131.5 455.2 L131.0 461.6 L130.5 459.1 L130.0 454.3 L129.5 453.9 L129.0 459.1 L128.5 456.1 L128.0 461.9 L127.5 461.7 L127.0 454.3 L126.5 462.4 L126.0 457.0 L125.5 454.1 L125.0 462.7 L124.5 465.0 L124.0 462.2 L123.5 459.3 L123.0 463.4 L122.5 464.6 L122.0 472.8 L121.5 466.7 L121.0 470.7 L120.5 462.6 L120.0 467.1 L119.5 463.4 L119.0 473.2 L118.5 467.2 L118.0 471.9 L117.5 462.0 L117.0 461.4 L116.5 466.7 L116.0 465.9 L115.5 467.3 L115.0 460.0 L114.5 461.2 L114.0 469.2 L113.5 467.2 L113.0 462.7 L112.5 464.6 L112.0 465.1 L111.5 463.9 L111.0 458.2 L110.5 464.7 L110.0 462.4 L109.5 454.6 L109.0 459.0 L108.5 463.7 L108.0 461.6 L107.5 464.8 L107.0 463.0 L106.5 459.6 L106.0 469.1 L105.5 459.8 L105.0 457.1 L104.5 464.7 L104.0 460.9 L103.5 464.0 L103.0 465.0 L102.5 461.1 L102.0 463.2 L101.5 465.1 L101.0 469.5 L100.5 468.1 L100.0 466.3 L99.5 466.0 L99.0 471.0 L98.5 474.1 L98.0 472.4 L97.5 467.2 L97.0 469.5 L96.5 462.9 L96.0 469.9 L95.5 467.4 L95.0 468.0 L94.5 457.9 L94.0 459.3 L93.5 460.3 L93.0 455.6 L92.5 456.0 L92.0 460.1 L91.5 458.5 L91.0 456.5 L90.5 453.3 L90.0 452.8 L89.5 442.2 L89.0 451.2 L88.5 441.8 L88.0 446.9 L87.5 443.6 L87.0 442.5 L86.5 440.9 L86.0 441.5 L85.5 437.6 L85.0 442.1 L84.5 436.9 L84.0 437.6 L83.5 434.9 L83.0 436.3 L82.5 442.1 L82.0 447.5 L81.5 448.0 L81.0 440.2 L80.5 439.6 L80.0 448.7 L79.5 440.7 L79.0 430.1 L78.5 439.0 L78.0 439.9 L77.5 430.2 L77.0 431.4 L76.5 433.4 L76.0 426.7 L75.5 427.9 L75.0 424.9 L74.5 425.6 L74.0 420.6 L73.5 422.8 L73.0 429.1 L72.5 427.7 L72.0 421.6 L71.5 431.4 L71.0 435.1 L70.5 430.6 L70.0 439.3 L69.5 441.0 L69.0 441.3 L68.5 438.0 L68.0 440.8 L67.5 440.4 L67.0 446.6 L66.5 442.0 L66.0 443.0 L65.5 446.4 L65.0 443.0 L64.5 443.3 L64.0 447.4 L63.5 455.7 L63.0 455.9 L62.5 458.9 L62.0 456.7 L61.5 462.1 L61.0 456.8 L60.5 466.5 L60.0 454.1 L59.5 460.9 L59.0 457.9 L58.5 453.7 L58.0 447.3 L57.5 445.6 L57.0 452.3 L56.5 439.8 L56.0 450.2 L55.5 444.8 L55.0 447.9 L54.5 444.5 L54.0 436.8 L53.5 447.6 L53.0 445.5 L52.5 436.6 L52.0 437.5 L51.5 438.8 L51.0 436.2 L50.5 442.8 L50.0 442.1 L49.5 443.7 L49.0 444.5 L48.5 461.1 L48.0 463.5 L47.5 478.9 L47.0 498.9 L46.5 506.4 L46.0 514.1 Z" fill="#4122fb" fill-opacity="0.97" stroke="#4122fb" stroke-width="0.5" stroke-linejoin="round"/><path d="M47.0 497.9 V510.6 M48.0 462.5 V485.1 M49.5 442.7 V466.4 M51.0 435.2 V456.6 M53.5 446.6 V457.8 M55.0 446.9 V455.6 M58.0 446.3 V464.6 M58.5 452.7 V467.5 M59.0 456.9 V469.2 M61.0 455.8 V486.3 M61.5 461.1 V484.2 M63.0 454.9 V463.2 M64.0 446.4 V460.2 M64.5 442.3 V465.0 M65.0 442.0 V465.6 M65.5 445.4 V458.0 M66.0 442.0 V465.2 M67.5 439.4 V467.6 M68.0 439.8 V457.2 M69.5 440.0 V456.7 M70.5 429.6 V444.2 M71.5 430.4 V441.8 M72.0 420.6 V440.7 M73.5 421.8 V436.2 M75.0 423.9 V429.2 M77.5 429.2 V450.6 M78.0 438.9 V446.6 M78.5 438.0 V452.6 M80.5 438.6 V461.7 M81.5 447.0 V456.5 M85.0 441.1 V450.2 M89.0 450.2 V465.8 M89.5 441.2 V466.7 M93.0 454.6 V467.5 M95.0 467.0 V476.4 M95.5 466.4 V478.4 M97.0 468.5 V482.9 M97.5 466.2 V475.8 M98.0 471.4 V478.1 M100.0 465.3 V491.9 M100.5 467.1 V482.9 M101.0 468.5 V486.7 M101.5 464.1 V480.5 M105.0 456.1 V482.3 M105.5 458.8 V483.5 M106.5 458.6 V482.2 M107.0 462.0 V474.5 M107.5 463.8 V475.1 M108.0 460.6 V486.5 M108.5 462.7 V483.5 M109.0 458.0 V483.9 M109.5 453.6 V484.7 M114.5 460.2 V482.6 M116.0 464.9 V477.2 M117.5 461.0 V480.5 M119.5 462.4 V489.5 M120.5 461.6 V483.6 M121.0 469.7 V484.5 M121.5 465.7 V477.5 M123.0 462.4 V481.9 M125.0 461.7 V469.0 M125.5 453.1 V473.1 M126.0 456.0 V473.4 M126.5 461.4 V468.3 M127.5 460.7 V470.0 M128.5 455.1 V469.4 M129.0 458.1 V462.0 M133.0 461.8 V476.6 M133.5 468.6 V475.2 M134.5 460.4 V472.8 M135.5 462.3 V476.8 M136.0 460.7 V475.1 M137.5 459.3 V471.4 M138.0 462.6 V468.0 M138.5 463.9 V471.8 M142.0 466.7 V487.5 M144.5 467.6 V485.5 M145.0 466.7 V484.9 M145.5 468.9 V482.2 M147.0 464.7 V473.4 M147.5 466.8 V479.0 M148.0 469.1 V479.1 M148.5 468.9 V483.1 M149.0 474.2 V480.9 M149.5 474.1 V480.6 M150.0 478.3 V488.2 M151.0 473.7 V489.8 M151.5 482.2 V491.3 M152.0 483.4 V494.9 M153.5 477.4 V489.2 M154.5 479.4 V500.5 M155.0 479.2 V492.0 M155.5 489.5 V501.3 M158.0 492.9 V510.9 M158.5 496.0 V504.3 M159.0 487.7 V501.6 M160.0 483.1 V500.1 M163.5 473.1 V487.8 M164.0 470.5 V483.9 M164.5 470.1 V485.3 M165.5 471.3 V487.3 M168.5 471.8 V485.8 M170.5 483.2 V490.4 M171.5 478.1 V495.5 M174.0 479.8 V497.9 M175.0 474.5 V491.5 M175.5 478.0 V489.5 M176.0 476.0 V492.5 M176.5 481.3 V492.8 M177.0 479.5 V491.1 M178.5 480.1 V487.9 M180.0 482.5 V495.0 M181.5 481.4 V495.9 M182.5 491.4 V501.3 M184.5 496.3 V506.3 M185.0 498.4 V509.2 M189.0 498.3 V510.0 M190.0 499.1 V511.4 M191.5 501.5 V509.3 M192.0 500.6 V511.4 M192.5 504.3 V508.1 M194.0 503.5 V508.6 M194.5 495.3 V508.8 M195.0 503.0 V508.1 M196.5 494.2 V513.5 M197.5 501.5 V510.8 M199.5 501.5 V505.7 M201.0 502.5 V510.0 M202.0 496.2 V513.6 M203.0 498.7 V510.5 M203.5 498.4 V513.8 M205.5 500.6 V511.0 M208.0 506.2 V511.9 M208.5 502.0 V510.3 M210.5 503.2 V513.9 M212.5 503.0 V514.0 M213.5 507.0 V512.3 M215.0 508.6 V513.5 M218.5 509.9 V513.8 M219.5 510.4 V513.0 M220.0 511.4 V514.0" stroke="#4122fb" stroke-width="0.75" fill="none"/></svg>
<svg width="736" height="874"><path d="M48.0 459.3 V463.5 M49.5 429.6 V443.7 M50.0 434.5 V442.1 M53.0 424.8 V445.5 M53.5 431.8 V447.6 M54.0 429.4 V436.8 M55.0 430.9 V447.9 M55.5 434.6 V444.8 M56.0 438.1 V450.2 M58.5 435.9 V453.7 M60.0 448.5 V454.1 M61.0 444.3 V456.8 M61.5 449.1 V462.1 M62.0 438.2 V456.7 M62.5 452.7 V458.9 M63.5 444.7 V455.7 M65.0 433.3 V443.0 M65.5 435.7 V446.4 M66.0 436.9 V443.0 M66.5 428.1 V442.0 M68.0 435.0 V440.8 M68.5 428.9 V438.0 M70.5 422.6 V430.6 M71.0 429.6 V435.1 M71.5 424.9 V431.4 M72.0 411.9 V421.6 M72.5 418.8 V427.7 M74.5 420.3 V425.6 M77.0 420.3 V431.4 M77.5 425.4 V430.2 M79.0 416.5 V430.1 M80.5 425.9 V439.6 M81.5 429.5 V448.0 M82.0 438.1 V447.5 M83.0 429.2 V436.3 M83.5 426.9 V434.9 M84.5 428.7 V436.9 M85.0 434.8 V442.1 M86.0 433.7 V441.5 M86.5 435.0 V440.9 M89.0 443.4 V451.2 M89.5 430.7 V442.2 M90.0 436.9 V452.8 M90.5 441.0 V453.3 M93.0 447.7 V455.6 M97.0 460.2 V469.5 M101.0 456.2 V469.5 M101.5 451.2 V465.1 M103.5 450.9 V464.0 M106.5 446.6 V459.6 M107.5 457.7 V464.8 M108.5 447.3 V463.7 M109.0 445.2 V459.0 M110.5 451.0 V464.7 M115.0 450.9 V460.0 M115.5 456.8 V467.3 M116.0 459.1 V465.9 M116.5 454.7 V466.7 M117.0 453.7 V461.4 M117.5 449.9 V462.0 M119.0 457.5 V473.2 M119.5 456.4 V463.4 M121.0 460.7 V470.7 M121.5 450.7 V466.7 M122.0 457.1 V472.8 M124.5 453.7 V465.0 M125.0 455.7 V462.7 M128.0 452.3 V461.9 M128.5 449.3 V456.1 M129.0 446.9 V459.1 M129.5 445.9 V453.9 M130.0 444.0 V454.3 M131.0 454.3 V461.6 M131.5 451.0 V455.2 M133.5 461.9 V469.6 M134.5 453.7 V461.4 M136.0 454.4 V461.7 M137.0 454.5 V461.1 M138.5 455.4 V464.9 M139.0 453.6 V463.3 M140.0 453.5 V463.2 M141.5 468.6 V475.8 M145.0 462.5 V467.7 M148.0 462.9 V470.1 M149.5 468.9 V475.1 M150.0 468.3 V479.3 M152.0 472.4 V484.4 M154.5 467.1 V480.4 M155.5 473.1 V490.5 M156.5 471.4 V486.0 M158.0 486.1 V493.9 M160.0 472.7 V484.1 M161.0 470.5 V480.1 M161.5 478.7 V487.1 M163.0 470.2 V479.3 M165.0 469.5 V479.2 M166.5 464.3 V473.4 M168.5 468.2 V472.8 M169.0 469.1 V479.6 M170.5 475.5 V484.2 M172.0 477.6 V483.0 M172.5 469.7 V487.1 M180.5 475.8 V485.6 M181.0 477.5 V486.1 M182.5 485.6 V492.4 M184.0 488.0 V494.1 M185.0 491.7 V499.4 M187.5 484.8 V499.9 M190.0 493.7 V500.1 M193.0 499.2 V503.2 M193.5 489.5 V505.3 M194.0 496.4 V504.5 M195.0 495.1 V504.0 M195.5 491.8 V500.0 M196.0 484.9 V497.5 M197.0 496.9 V501.5 M197.5 485.7 V502.5 M200.0 490.6 V498.0 M202.0 492.6 V497.2 M203.5 493.6 V499.4 M204.5 496.2 V501.7 M205.5 496.9 V501.6 M206.5 495.0 V500.9 M208.5 498.6 V503.0 M209.0 498.4 V505.2 M210.5 499.3 V504.2 M212.5 498.0 V504.0 M214.5 503.4 V508.3" stroke="#000" stroke-opacity="0.4" stroke-width="0.45" fill="none"/></svg>
<svg width="736" height="874" shape-rendering="crispEdges" style="mix-blend-mode:lighten"><line x1="58.71" y1="347.3" x2="58.71" y2="514.5" stroke="#525252" stroke-width="1"/><line x1="72.13" y1="347.3" x2="72.13" y2="514.5" stroke="#8e8e8e" stroke-width="1"/><line x1="85.54" y1="347.3" x2="85.54" y2="514.5" stroke="#525252" stroke-width="1"/><line x1="98.96" y1="347.3" x2="98.96" y2="514.5" stroke="#8e8e8e" stroke-width="1"/><line x1="112.37" y1="347.3" x2="112.37" y2="514.5" stroke="#525252" stroke-width="1"/><line x1="125.79" y1="347.3" x2="125.79" y2="514.5" stroke="#8e8e8e" stroke-width="1"/><line x1="139.20" y1="347.3" x2="139.20" y2="514.5" stroke="#525252" stroke-width="1"/><line x1="152.62" y1="347.3" x2="152.62" y2="514.5" stroke="#8e8e8e" stroke-width="1"/><line x1="166.03" y1="347.3" x2="166.03" y2="514.5" stroke="#525252" stroke-width="1"/><line x1="179.45" y1="347.3" x2="179.45" y2="514.5" stroke="#d4d4d0" stroke-width="1"/><line x1="192.86" y1="347.3" x2="192.86" y2="514.5" stroke="#525252" stroke-width="1"/><line x1="206.28" y1="347.3" x2="206.28" y2="514.5" stroke="#8e8e8e" stroke-width="1"/><line x1="219.69" y1="347.3" x2="219.69" y2="514.5" stroke="#525252" stroke-width="1"/><line x1="233.10" y1="347.3" x2="233.10" y2="514.5" stroke="#8e8e8e" stroke-width="1"/><line x1="246.52" y1="347.3" x2="246.52" y2="514.5" stroke="#525252" stroke-width="1"/><line x1="259.93" y1="347.3" x2="259.93" y2="514.5" stroke="#8e8e8e" stroke-width="1"/><line x1="273.35" y1="347.3" x2="273.35" y2="514.5" stroke="#525252" stroke-width="1"/><line x1="286.76" y1="347.3" x2="286.76" y2="514.5" stroke="#8e8e8e" stroke-width="1"/><line x1="300.18" y1="347.3" x2="300.18" y2="514.5" stroke="#525252" stroke-width="1"/><line x1="313.59" y1="347.3" x2="313.59" y2="514.5" stroke="#d4d4d0" stroke-width="1"/><line x1="327.01" y1="347.3" x2="327.01" y2="514.5" stroke="#525252" stroke-width="1"/><line x1="340.42" y1="347.3" x2="340.42" y2="514.5" stroke="#8e8e8e" stroke-width="1"/><line x1="353.84" y1="347.3" x2="353.84" y2="514.5" stroke="#525252" stroke-width="1"/><line x1="367.25" y1="347.3" x2="367.25" y2="514.5" stroke="#8e8e8e" stroke-width="1"/><line x1="380.66" y1="347.3" x2="380.66" y2="514.5" stroke="#525252" stroke-width="1"/><line x1="394.08" y1="347.3" x2="394.08" y2="514.5" stroke="#8e8e8e" stroke-width="1"/><line x1="407.49" y1="347.3" x2="407.49" y2="514.5" stroke="#525252" stroke-width="1"/><line x1="420.91" y1="347.3" x2="420.91" y2="514.5" stroke="#8e8e8e" stroke-width="1"/><line x1="434.32" y1="347.3" x2="434.32" y2="514.5" stroke="#525252" stroke-width="1"/><line x1="447.74" y1="347.3" x2="447.74" y2="514.5" stroke="#d4d4d0" stroke-width="1"/><line x1="461.15" y1="347.3" x2="461.15" y2="514.5" stroke="#525252" stroke-width="1"/><line x1="474.57" y1="347.3" x2="474.57" y2="514.5" stroke="#8e8e8e" stroke-width="1"/><line x1="487.98" y1="347.3" x2="487.98" y2="514.5" stroke="#525252" stroke-width="1"/><line x1="501.40" y1="347.3" x2="501.40" y2="514.5" stroke="#8e8e8e" stroke-width="1"/><line x1="514.81" y1="347.3" x2="514.81" y2="514.5" stroke="#525252" stroke-width="1"/><line x1="528.23" y1="347.3" x2="528.23" y2="514.5" stroke="#8e8e8e" stroke-width="1"/><line x1="541.64" y1="347.3" x2="541.64" y2="514.5" stroke="#525252" stroke-width="1"/><line x1="555.05" y1="347.3" x2="555.05" y2="514.5" stroke="#8e8e8e" stroke-width="1"/><line x1="568.47" y1="347.3" x2="568.47" y2="514.5" stroke="#525252" stroke-width="1"/><line x1="581.88" y1="347.3" x2="581.88" y2="514.5" stroke="#d4d4d0" stroke-width="1"/><line x1="595.30" y1="347.3" x2="595.30" y2="514.5" stroke="#525252" stroke-width="1"/><line x1="608.71" y1="347.3" x2="608.71" y2="514.5" stroke="#8e8e8e" stroke-width="1"/><line x1="622.13" y1="347.3" x2="622.13" y2="514.5" stroke="#525252" stroke-width="1"/><line x1="635.54" y1="347.3" x2="635.54" y2="514.5" stroke="#8e8e8e" stroke-width="1"/><line x1="648.96" y1="347.3" x2="648.96" y2="514.5" stroke="#525252" stroke-width="1"/><line x1="662.37" y1="347.3" x2="662.37" y2="514.5" stroke="#8e8e8e" stroke-width="1"/><line x1="675.79" y1="347.3" x2="675.79" y2="514.5" stroke="#525252" stroke-width="1"/><line x1="689.20" y1="347.3" x2="689.20" y2="514.5" stroke="#8e8e8e" stroke-width="1"/><line x1="46.0" y1="359.10" x2="689.2" y2="359.10" stroke="#626262" stroke-width="1"/><line x1="46.0" y1="371.63" x2="689.2" y2="371.63" stroke="#929292" stroke-width="1"/><line x1="46.0" y1="384.16" x2="689.2" y2="384.16" stroke="#626262" stroke-width="1"/><line x1="46.0" y1="396.69" x2="689.2" y2="396.69" stroke="#c4c4c0" stroke-width="1"/><line x1="46.0" y1="409.22" x2="689.2" y2="409.22" stroke="#626262" stroke-width="1"/><line x1="46.0" y1="421.75" x2="689.2" y2="421.75" stroke="#929292" stroke-width="1"/><line x1="46.0" y1="434.28" x2="689.2" y2="434.28" stroke="#626262" stroke-width="1"/><line x1="46.0" y1="446.81" x2="689.2" y2="446.81" stroke="#c4c4c0" stroke-width="1"/><line x1="46.0" y1="459.34" x2="689.2" y2="459.34" stroke="#626262" stroke-width="1"/><line x1="46.0" y1="471.87" x2="689.2" y2="471.87" stroke="#929292" stroke-width="1"/><line x1="46.0" y1="484.40" x2="689.2" y2="484.40" stroke="#626262" stroke-width="1"/><line x1="46.0" y1="496.93" x2="689.2" y2="496.93" stroke="#c4c4c0" stroke-width="1"/><line x1="46.0" y1="509.46" x2="689.2" y2="509.46" stroke="#626262" stroke-width="1"/></svg>
<div class="t" style="right:697.8px;top:357.20000000000005px;font-size:7.4px;color:#8c8c8c;font-weight:normal;letter-spacing:0.3px;">-6</div>
<div class="t" style="right:697.8px;top:369.73px;font-size:7.4px;color:#e8e8e8;font-weight:normal;letter-spacing:0.3px;">-12</div>
<div class="t" style="right:697.8px;top:382.26000000000005px;font-size:7.4px;color:#8c8c8c;font-weight:normal;letter-spacing:0.3px;">-18</div>
<div class="t" style="right:697.8px;top:394.79px;font-size:7.4px;color:#ffffff;font-weight:bold;letter-spacing:0.3px;">-24</div>
<div class="t" style="right:697.8px;top:407.32000000000005px;font-size:7.4px;color:#6c6c6c;font-weight:normal;letter-spacing:0.3px;">-30</div>
<div class="t" style="right:697.8px;top:419.85px;font-size:7.4px;color:#e8e8e8;font-weight:normal;letter-spacing:0.3px;">-36</div>
<div class="t" style="right:697.8px;top:432.38000000000005px;font-size:7.4px;color:#8c8c8c;font-weight:normal;letter-spacing:0.3px;">-42</div>
<div class="t" style="right:697.8px;top:444.91px;font-size:7.4px;color:#ffffff;font-weight:bold;letter-spacing:0.3px;">-48</div>
<div class="t" style="right:697.8px;top:457.44000000000005px;font-size:7.4px;color:#6c6c6c;font-weight:normal;letter-spacing:0.3px;">-54</div>
<div class="t" style="right:697.8px;top:469.97px;font-size:7.4px;color:#e8e8e8;font-weight:normal;letter-spacing:0.3px;">-60</div>
<div class="t" style="right:697.8px;top:482.50000000000006px;font-size:7.4px;color:#8c8c8c;font-weight:normal;letter-spacing:0.3px;">-66</div>
<div class="t" style="right:697.8px;top:495.03000000000003px;font-size:7.4px;color:#ffffff;font-weight:bold;letter-spacing:0.3px;">-72</div>
<div class="t" style="right:697.8px;top:507.56000000000006px;font-size:7.4px;color:#8c8c8c;font-weight:normal;letter-spacing:0.3px;">-78</div>
<div class="t" style="left:8.2px;top:429px;font-size:6.8px;color:#eee;">dBFS</div>
<div class="t" style="left:60.12916666666666px;width:24px;text-align:center;top:526.6px;font-size:7.2px;color:#8a8a8a;font-weight:normal;">1000</div>
<div class="t" style="left:86.95833333333334px;width:24px;text-align:center;top:526.6px;font-size:7.2px;color:#8a8a8a;font-weight:normal;">2000</div>
<div class="t" style="left:113.78750000000001px;width:24px;text-align:center;top:526.6px;font-size:7.2px;color:#8a8a8a;font-weight:normal;">3000</div>
<div class="t" style="left:140.61666666666667px;width:24px;text-align:center;top:526.6px;font-size:7.2px;color:#8a8a8a;font-weight:normal;">4000</div>
<div class="t" style="left:167.44583333333333px;width:24px;text-align:center;top:526.6px;font-size:7.2px;color:#f0f0f0;font-weight:bold;">5000</div>
<div class="t" style="left:194.27500000000003px;width:24px;text-align:center;top:526.6px;font-size:7.2px;color:#8a8a8a;font-weight:normal;">6000</div>
<div class="t" style="left:221.10416666666669px;width:24px;text-align:center;top:526.6px;font-size:7.2px;color:#8a8a8a;font-weight:normal;">7000</div>
<div class="t" style="left:247.93333333333334px;width:24px;text-align:center;top:526.6px;font-size:7.2px;color:#8a8a8a;font-weight:normal;">8000</div>
<div class="t" style="left:274.76250000000005px;width:24px;text-align:center;top:526.6px;font-size:7.2px;color:#8a8a8a;font-weight:normal;">9000</div>
<div class="t" style="left:301.5916666666667px;width:24px;text-align:center;top:526.6px;font-size:7.2px;color:#f0f0f0;font-weight:bold;">10000</div>
<div class="t" style="left:328.42083333333335px;width:24px;text-align:center;top:526.6px;font-size:7.2px;color:#8a8a8a;font-weight:normal;">11000</div>
<div class="t" style="left:355.25000000000006px;width:24px;text-align:center;top:526.6px;font-size:7.2px;color:#8a8a8a;font-weight:normal;">12000</div>
<div class="t" style="left:382.0791666666667px;width:24px;text-align:center;top:526.6px;font-size:7.2px;color:#8a8a8a;font-weight:normal;">13000</div>
<div class="t" style="left:408.90833333333336px;width:24px;text-align:center;top:526.6px;font-size:7.2px;color:#8a8a8a;font-weight:normal;">14000</div>
<div class="t" style="left:435.73750000000007px;width:24px;text-align:center;top:526.6px;font-size:7.2px;color:#f0f0f0;font-weight:bold;">15000</div>
<div class="t" style="left:462.5666666666667px;width:24px;text-align:center;top:526.6px;font-size:7.2px;color:#8a8a8a;font-weight:normal;">16000</div>
<div class="t" style="left:489.39583333333337px;width:24px;text-align:center;top:526.6px;font-size:7.2px;color:#8a8a8a;font-weight:normal;">17000</div>
<div class="t" style="left:516.225px;width:24px;text-align:center;top:526.6px;font-size:7.2px;color:#8a8a8a;font-weight:normal;">18000</div>
<div class="t" style="left:543.0541666666667px;width:24px;text-align:center;top:526.6px;font-size:7.2px;color:#8a8a8a;font-weight:normal;">19000</div>
<div class="t" style="left:569.8833333333333px;width:24px;text-align:center;top:526.6px;font-size:7.2px;color:#f0f0f0;font-weight:bold;">20000</div>
<div class="t" style="left:596.7125px;width:24px;text-align:center;top:526.6px;font-size:7.2px;color:#8a8a8a;font-weight:normal;">21000</div>
<div class="t" style="left:623.5416666666666px;width:24px;text-align:center;top:526.6px;font-size:7.2px;color:#8a8a8a;font-weight:normal;">22000</div>
<div class="t" style="left:650.3708333333334px;width:24px;text-align:center;top:526.6px;font-size:7.2px;color:#8a8a8a;font-weight:normal;">23000</div>
<div class="t" style="left:679.5px;top:526.6px;font-size:7.2px;color:#b8b8b8;">24000</div>
<div style="left:6.9px;top:528.4px;width:672.4px;height:47px;background:#d4d0c8;border-top:1.2px solid #aaa6a0;border-left:1px solid #d4d0c8;border-right:1px solid #404040;border-bottom:1px solid #404040;"></div>
<div style="left:8.1px;top:529.6px;width:670.2px;height:23px;background:#000;"></div>
<div style="left:22px;top:515.8px;width:53.5px;height:13.800000000000068px;background:#d4d0c8;border-top:1px solid #fff;border-left:1px solid #fff;border-right:1px solid #505050;border-radius:2px 2px 0 0;"></div>
<div class="c" style="left:22px;top:519.0px;width:53.5px;height:10px;font-size:8.2px;color:#111;">Frequency</div>
<div style="left:76.5px;top:515.8px;width:52px;height:13.800000000000068px;background:#d4d0c8;border-top:1px solid #fff;border-left:1px solid #fff;border-right:1px solid #505050;border-radius:2px 2px 0 0;"></div>
<div class="c" style="left:76.5px;top:519.0px;width:52px;height:10px;font-size:8.2px;color:#111;">Amplitude</div>
<div style="left:130px;top:515.8px;width:36.5px;height:13.800000000000068px;background:#d4d0c8;border-top:1px solid #fff;border-left:1px solid #fff;border-right:1px solid #505050;border-radius:2px 2px 0 0;"></div>
<div style="left:135.8px;top:518.1999999999999px;width:9.8px;height:9.8px;background:#00e800;border:1px solid #303030;"></div>
<div class="t" style="left:148.3px;top:519.0999999999999px;font-size:8.4px;color:#111;">in0</div>
<div style="left:168.5px;top:515.8px;width:36px;height:13.800000000000068px;background:#d4d0c8;border-top:1px solid #fff;border-left:1px solid #fff;border-right:1px solid #505050;border-radius:2px 2px 0 0;"></div>
<div style="left:174.3px;top:518.1999999999999px;width:9.8px;height:9.8px;background:#ff00d0;border:1px solid #303030;"></div>
<div class="t" style="left:186.8px;top:519.0999999999999px;font-size:8.4px;color:#111;">in1</div>
<div style="left:206.5px;top:515.8px;width:37.5px;height:13.800000000000068px;background:#d4d0c8;border-top:1px solid #fff;border-left:1px solid #fff;border-right:1px solid #505050;border-radius:2px 2px 0 0;"></div>
<div style="left:212.3px;top:518.1999999999999px;width:9.8px;height:9.8px;background:#0080ff;border:1px solid #303030;"></div>
<div class="t" style="left:224.8px;top:519.0999999999999px;font-size:8.4px;color:#111;">in2</div>
<div style="left:246px;top:514.5px;width:37px;height:15.100000000000023px;background:#d4d0c8;border-top:1px solid #fff;border-left:1px solid #fff;border-right:1px solid #505050;border-radius:2px 2px 0 0;"></div>
<div style="left:251.8px;top:516.9px;width:9.8px;height:9.8px;background:#ff8000;border:1px solid #303030;"></div>
<div class="t" style="left:264.3px;top:517.8px;font-size:8.4px;color:#111;">in3</div>
<div style="left:285px;top:515.8px;width:36px;height:13.800000000000068px;background:#d4d0c8;border-top:1px solid #fff;border-left:1px solid #fff;border-right:1px solid #505050;border-radius:2px 2px 0 0;"></div>
<div style="left:290.8px;top:518.1999999999999px;width:9.8px;height:9.8px;background:#c0f000;border:1px solid #303030;"></div>
<div class="t" style="left:303.3px;top:519.0999999999999px;font-size:8.4px;color:#111;">in4</div>
<div style="left:323px;top:515.8px;width:37px;height:13.800000000000068px;background:#d4d0c8;border-top:1px solid #fff;border-left:1px solid #fff;border-right:1px solid #505050;border-radius:2px 2px 0 0;"></div>
<div style="left:328.8px;top:518.1999999999999px;width:9.8px;height:9.8px;background:#00f0c0;border:1px solid #303030;"></div>
<div class="t" style="left:341.3px;top:519.0999999999999px;font-size:8.4px;color:#111;">in5</div>
<div style="left:362px;top:515.8px;width:36px;height:13.800000000000068px;background:#d4d0c8;border-top:1px solid #fff;border-left:1px solid #fff;border-right:1px solid #505050;border-radius:2px 2px 0 0;"></div>
<div style="left:367.8px;top:518.1999999999999px;width:9.8px;height:9.8px;background:#3000ff;border:1px solid #303030;"></div>
<div class="t" style="left:380.3px;top:519.0999999999999px;font-size:8.4px;color:#111;">in6</div>
<div style="left:400px;top:515.8px;width:36px;height:13.800000000000068px;background:#d4d0c8;border-top:1px solid #fff;border-left:1px solid #fff;border-right:1px solid #505050;border-radius:2px 2px 0 0;"></div>
<div style="left:405.8px;top:518.1999999999999px;width:9.8px;height:9.8px;background:#f00040;border:1px solid #303030;"></div>
<div class="t" style="left:418.3px;top:519.0999999999999px;font-size:8.4px;color:#111;">in7</div>
<div style="left:8.5px;top:518.8px;width:10px;height:5.3px;background:#5676ac;border-radius:50%;border:0.8px solid #2a3a62;"></div>
<div style="left:8.5px;top:529.5px;width:670px;height:4px;overflow:hidden;">
<div class="t" style="left:51.62916666666666px;width:24px;text-align:center;top:-2.9px;font-size:7.2px;color:#8a8a8a;font-weight:normal;">1000</div>
<div class="t" style="left:78.45833333333334px;width:24px;text-align:center;top:-2.9px;font-size:7.2px;color:#8a8a8a;font-weight:normal;">2000</div>
<div class="t" style="left:105.28750000000001px;width:24px;text-align:center;top:-2.9px;font-size:7.2px;color:#8a8a8a;font-weight:normal;">3000</div>
<div class="t" style="left:132.11666666666667px;width:24px;text-align:center;top:-2.9px;font-size:7.2px;color:#8a8a8a;font-weight:normal;">4000</div>
<div class="t" style="left:158.94583333333333px;width:24px;text-align:center;top:-2.9px;font-size:7.2px;color:#f0f0f0;font-weight:bold;">5000</div>
<div class="t" style="left:185.77500000000003px;width:24px;text-align:center;top:-2.9px;font-size:7.2px;color:#8a8a8a;font-weight:normal;">6000</div>
<div class="t" style="left:212.60416666666669px;width:24px;text-align:center;top:-2.9px;font-size:7.2px;color:#8a8a8a;font-weight:normal;">7000</div>
<div class="t" style="left:239.43333333333334px;width:24px;text-align:center;top:-2.9px;font-size:7.2px;color:#8a8a8a;font-weight:normal;">8000</div>
<div class="t" style="left:266.26250000000005px;width:24px;text-align:center;top:-2.9px;font-size:7.2px;color:#8a8a8a;font-weight:normal;">9000</div>
<div class="t" style="left:293.0916666666667px;width:24px;text-align:center;top:-2.9px;font-size:7.2px;color:#f0f0f0;font-weight:bold;">10000</div>
<div class="t" style="left:319.92083333333335px;width:24px;text-align:center;top:-2.9px;font-size:7.2px;color:#8a8a8a;font-weight:normal;">11000</div>
<div class="t" style="left:346.75000000000006px;width:24px;text-align:center;top:-2.9px;font-size:7.2px;color:#8a8a8a;font-weight:normal;">12000</div>
<div class="t" style="left:373.5791666666667px;width:24px;text-align:center;top:-2.9px;font-size:7.2px;color:#8a8a8a;font-weight:normal;">13000</div>
<div class="t" style="left:400.40833333333336px;width:24px;text-align:center;top:-2.9px;font-size:7.2px;color:#8a8a8a;font-weight:normal;">14000</div>
<div class="t" style="left:427.23750000000007px;width:24px;text-align:center;top:-2.9px;font-size:7.2px;color:#f0f0f0;font-weight:bold;">15000</div>
<div class="t" style="left:454.0666666666667px;width:24px;text-align:center;top:-2.9px;font-size:7.2px;color:#8a8a8a;font-weight:normal;">16000</div>
<div class="t" style="left:480.89583333333337px;width:24px;text-align:center;top:-2.9px;font-size:7.2px;color:#8a8a8a;font-weight:normal;">17000</div>
<div class="t" style="left:507.725px;width:24px;text-align:center;top:-2.9px;font-size:7.2px;color:#8a8a8a;font-weight:normal;">18000</div>
<div class="t" style="left:534.5541666666667px;width:24px;text-align:center;top:-2.9px;font-size:7.2px;color:#8a8a8a;font-weight:normal;">19000</div>
<div class="t" style="left:561.3833333333333px;width:24px;text-align:center;top:-2.9px;font-size:7.2px;color:#f0f0f0;font-weight:bold;">20000</div>
<div class="t" style="left:588.2125px;width:24px;text-align:center;top:-2.9px;font-size:7.2px;color:#8a8a8a;font-weight:normal;">21000</div>
<div class="t" style="left:615.0416666666666px;width:24px;text-align:center;top:-2.9px;font-size:7.2px;color:#8a8a8a;font-weight:normal;">22000</div>
<div class="t" style="left:641.8708333333334px;width:24px;text-align:center;top:-2.9px;font-size:7.2px;color:#8a8a8a;font-weight:normal;">23000</div>
</div>
<div style="left:83px;top:537.3px;width:522.5px;height:11.5px;background:#fff;border-top:1px solid #6a6a6a;border-left:1px solid #6a6a6a;border-bottom:1px solid #eee;border-right:1px solid #eee;"></div>
<div class="t" style="left:86.5px;top:539.2px;font-size:8px;color:#111;">in3</div>
<div class="bt" style="left:609px;top:535px;width:63px;height:15.5px;"></div>
<div style="left:619px;top:538px;width:9.5px;height:9.5px;background:#ff8000;border:1px solid #303030;"></div>
<div class="t" style="left:631.3px;top:538.6px;font-size:8.4px;color:#111;"><u>C</u>olour...</div>
<div class="bt" style="left:683px;top:537.5px;width:45.5px;height:15.5px;"></div>
<div style="left:692.2px;top:541.3px;width:3.2px;height:7.6px;background:#3a5a98;border:0.5px solid #1a2a58;"></div>
<div style="left:696.6px;top:541.3px;width:3.2px;height:7.6px;background:#3a5a98;border:0.5px solid #1a2a58;"></div>
<div class="t" style="left:703.8px;top:541.2px;font-size:8.4px;color:#111;">Hold</div>
<div class="t" style="left:13px;top:557px;font-size:8.4px;color:#111;"><u>W</u>indow Function:</div>
<div style="left:84px;top:555px;width:521.5px;height:12px;background:#fff;border-top:1px solid #6a6a6a;border-left:1px solid #6a6a6a;border-bottom:1px solid #eee;border-right:1px solid #eee;"></div>
<svg width="736" height="874"><path d="M86.5 565.5 C90 565.5 90.5 557 95 556.5" stroke="#222" stroke-width="0.8" fill="none"/></svg>
<div class="t" style="left:98px;top:557px;font-size:8.4px;color:#111;">Hamming</div>
<div class="bt" style="left:594px;top:556px;width:10.5px;height:10px;"></div>
<svg width="736" height="874"><path d="M596.8 559.6 l5 0 l-2.5 3.4 z" fill="#000"/></svg>
<div class="t" style="left:609px;top:557px;font-size:8.4px;color:#111;"><u>B</u>locks:</div>
<div style="left:640px;top:555.3px;width:32px;height:11.5px;background:#fff;border-top:1px solid #6a6a6a;border-left:1px solid #6a6a6a;border-bottom:1px solid #eee;border-right:1px solid #eee;"></div>
<div class="t" style="left:643.5px;top:557.2px;font-size:8px;color:#111;">8</div>
<div class="bt" style="left:662.5px;top:556.3px;width:8.5px;height:4.8px;"></div>
<div class="bt" style="left:662.5px;top:561.1px;width:8.5px;height:4.8px;"></div>
<svg width="736" height="874"><path d="M665 559.8 l3.6 0 l-1.8 -2.2 z M665 562.6 l3.6 0 l-1.8 2.2 z" fill="#000"/></svg>
<div style="left:665.5px;top:515px;width:14px;height:3.5px;background:#e8e8e8;border:0.5px solid #999;"></div>
<svg width="736" height="874"><path d="M670 518.5 l5 0 l0 2.5 l2 0 l-4.5 4.5 l-4.5 -4.5 l2 0 z" fill="#4a6aa8" stroke="#2a3a68" stroke-width="0.5"/></svg>
<div style="left:0px;top:582.5px;width:736px;height:11px;background:#2b5a82;"></div>
<div class="m" style="left:2px;top:584.6px;color:#f4f4f4;white-space:pre;">Jack/Alsa Audio Analyser-0.8.4  [jaaa]</div>
<div style="left:0px;top:593.5px;width:736px;height:280.5px;background:#e4e0d4;"></div>
<div style="left:0px;top:593.5px;width:1.3px;height:280.5px;background:#2b5a82;"></div>
<div style="left:734.6px;top:593.5px;width:1.4px;height:280.5px;background:#2b5a82;"></div>
<div style="left:0px;top:872.6px;width:736px;height:1.4px;background:#2b5a82;"></div>
<div style="left:26.2px;top:598.8px;width:658.8px;height:259.20000000000005px;background:#fff;"></div>
<svg width="736" height="874" shape-rendering="crispEdges"><line x1="81.10" y1="598.8" x2="81.10" y2="858.0" stroke="#e0e0e0" stroke-width="1"/><line x1="136.00" y1="598.8" x2="136.00" y2="858.0" stroke="#e0e0e0" stroke-width="1"/><line x1="190.90" y1="598.8" x2="190.90" y2="858.0" stroke="#e0e0e0" stroke-width="1"/><line x1="245.80" y1="598.8" x2="245.80" y2="858.0" stroke="#e0e0e0" stroke-width="1"/><line x1="300.70" y1="598.8" x2="300.70" y2="858.0" stroke="#e0e0e0" stroke-width="1"/><line x1="355.60" y1="598.8" x2="355.60" y2="858.0" stroke="#e0e0e0" stroke-width="1"/><line x1="410.50" y1="598.8" x2="410.50" y2="858.0" stroke="#e0e0e0" stroke-width="1"/><line x1="465.40" y1="598.8" x2="465.40" y2="858.0" stroke="#e0e0e0" stroke-width="1"/><line x1="520.30" y1="598.8" x2="520.30" y2="858.0" stroke="#e0e0e0" stroke-width="1"/><line x1="575.20" y1="598.8" x2="575.20" y2="858.0" stroke="#e0e0e0" stroke-width="1"/><line x1="630.10" y1="598.8" x2="630.10" y2="858.0" stroke="#e0e0e0" stroke-width="1"/><line x1="26.2" y1="650.64" x2="685.0" y2="650.64" stroke="#e0e0e0" stroke-width="1"/><line x1="26.2" y1="702.48" x2="685.0" y2="702.48" stroke="#e0e0e0" stroke-width="1"/><line x1="26.2" y1="754.32" x2="685.0" y2="754.32" stroke="#e0e0e0" stroke-width="1"/><line x1="26.2" y1="806.16" x2="685.0" y2="806.16" stroke="#e0e0e0" stroke-width="1"/><line x1="26.20" y1="858.5" x2="26.20" y2="861.8" stroke="#111" stroke-width="0.9"/><line x1="53.65" y1="858.5" x2="53.65" y2="861.8" stroke="#111" stroke-width="0.9"/><line x1="81.10" y1="858.5" x2="81.10" y2="861.8" stroke="#111" stroke-width="0.9"/><line x1="108.55" y1="858.5" x2="108.55" y2="861.8" stroke="#111" stroke-width="0.9"/><line x1="136.00" y1="858.5" x2="136.00" y2="861.8" stroke="#111" stroke-width="0.9"/><line x1="163.45" y1="858.5" x2="163.45" y2="861.8" stroke="#111" stroke-width="0.9"/><line x1="190.90" y1="858.5" x2="190.90" y2="861.8" stroke="#111" stroke-width="0.9"/><line x1="218.35" y1="858.5" x2="218.35" y2="861.8" stroke="#111" stroke-width="0.9"/><line x1="245.80" y1="858.5" x2="245.80" y2="861.8" stroke="#111" stroke-width="0.9"/><line x1="273.25" y1="858.5" x2="273.25" y2="861.8" stroke="#111" stroke-width="0.9"/><line x1="300.70" y1="858.5" x2="300.70" y2="861.8" stroke="#111" stroke-width="0.9"/><line x1="328.15" y1="858.5" x2="328.15" y2="861.8" stroke="#111" stroke-width="0.9"/><line x1="355.60" y1="858.5" x2="355.60" y2="861.8" stroke="#111" stroke-width="0.9"/><line x1="383.05" y1="858.5" x2="383.05" y2="861.8" stroke="#111" stroke-width="0.9"/><line x1="410.50" y1="858.5" x2="410.50" y2="861.8" stroke="#111" stroke-width="0.9"/><line x1="437.95" y1="858.5" x2="437.95" y2="861.8" stroke="#111" stroke-width="0.9"/><line x1="465.40" y1="858.5" x2="465.40" y2="861.8" stroke="#111" stroke-width="0.9"/><line x1="492.85" y1="858.5" x2="492.85" y2="861.8" stroke="#111" stroke-width="0.9"/><line x1="520.30" y1="858.5" x2="520.30" y2="861.8" stroke="#111" stroke-width="0.9"/><line x1="547.75" y1="858.5" x2="547.75" y2="861.8" stroke="#111" stroke-width="0.9"/><line x1="575.20" y1="858.5" x2="575.20" y2="861.8" stroke="#111" stroke-width="0.9"/><line x1="602.65" y1="858.5" x2="602.65" y2="861.8" stroke="#111" stroke-width="0.9"/><line x1="630.10" y1="858.5" x2="630.10" y2="861.8" stroke="#111" stroke-width="0.9"/><line x1="657.55" y1="858.5" x2="657.55" y2="861.8" stroke="#111" stroke-width="0.9"/><line x1="685.00" y1="858.5" x2="685.00" y2="861.8" stroke="#111" stroke-width="0.9"/><line x1="23.0" y1="598.80" x2="25.9" y2="598.80" stroke="#111" stroke-width="0.9"/><line x1="23.0" y1="650.64" x2="25.9" y2="650.64" stroke="#111" stroke-width="0.9"/><line x1="23.0" y1="702.48" x2="25.9" y2="702.48" stroke="#111" stroke-width="0.9"/><line x1="23.0" y1="754.32" x2="25.9" y2="754.32" stroke="#111" stroke-width="0.9"/><line x1="23.0" y1="806.16" x2="25.9" y2="806.16" stroke="#111" stroke-width="0.9"/><line x1="23.0" y1="858.00" x2="25.9" y2="858.00" stroke="#111" stroke-width="0.9"/></svg>
<div class="t" style="right:715.4px;top:595.5999999999999px;font-size:6.6px;color:#111;">0</div>
<div class="t" style="right:715.4px;top:647.4399999999999px;font-size:6.6px;color:#111;">-20</div>
<div class="t" style="right:715.4px;top:699.28px;font-size:6.6px;color:#111;">-40</div>
<div class="t" style="right:715.4px;top:751.1199999999999px;font-size:6.6px;color:#111;">-60</div>
<div class="t" style="right:715.4px;top:802.9599999999999px;font-size:6.6px;color:#111;">-80</div>
<div class="t" style="right:715.4px;top:854.8px;font-size:6.6px;color:#111;">-100</div>
<div class="t" style="left:16.2px;width:20px;text-align:center;top:862.6px;font-size:6.4px;color:#111;">0k</div>
<div class="t" style="left:71.1px;width:20px;text-align:center;top:862.6px;font-size:6.4px;color:#111;">2k</div>
<div class="t" style="left:126.0px;width:20px;text-align:center;top:862.6px;font-size:6.4px;color:#111;">4k</div>
<div class="t" style="left:180.89999999999998px;width:20px;text-align:center;top:862.6px;font-size:6.4px;color:#111;">6k</div>
<div class="t" style="left:235.79999999999998px;width:20px;text-align:center;top:862.6px;font-size:6.4px;color:#111;">8k</div>
<div class="t" style="left:290.7px;width:20px;text-align:center;top:862.6px;font-size:6.4px;color:#111;">10k</div>
<div class="t" style="left:345.59999999999997px;width:20px;text-align:center;top:862.6px;font-size:6.4px;color:#111;">12k</div>
<div class="t" style="left:400.49999999999994px;width:20px;text-align:center;top:862.6px;font-size:6.4px;color:#111;">14k</div>
<div class="t" style="left:455.4px;width:20px;text-align:center;top:862.6px;font-size:6.4px;color:#111;">16k</div>
<div class="t" style="left:510.29999999999995px;width:20px;text-align:center;top:862.6px;font-size:6.4px;color:#111;">18k</div>
<div class="t" style="left:565.2px;width:20px;text-align:center;top:862.6px;font-size:6.4px;color:#111;">20k</div>
<div class="t" style="left:620.1px;width:20px;text-align:center;top:862.6px;font-size:6.4px;color:#111;">22k</div>
<div class="t" style="left:675.0px;width:20px;text-align:center;top:862.6px;font-size:6.4px;color:#111;">24k</div>
<div class="t" style="left:32px;top:602.5px;font-size:7.1px;color:#ff1010;letter-spacing:0.36px;">BW = 46.88 Hz = 16.71 dBHz, VA = 119, Ptot = -15.28</div>
<svg width="736" height="874"><path d="M26.2 757.2 L27.1 749.0 L28.0 703.0 L28.5 688.9 L29.7 680.0 L31.0 681.0 L32.4 673.9 L33.4 677.4 L35.0 670.3 L36.3 671.2 L37.3 688.9 L38.6 683.6 L39.4 684.5 L40.8 696.8 L42.1 701.2 L43.5 700.4 L45.1 688.0 L46.0 687.1 L47.0 692.4 L48.3 685.3 L49.7 682.7 L51.4 671.2 L52.7 672.1 L54.5 667.7 L55.9 668.6 L57.5 680.0 L59.8 682.7 L62.4 691.0 L64.5 682.7 L66.3 680.0 L68.9 675.3 L70.4 679.2 L72.5 690.6 L73.9 704.8 L76.2 720.7 L77.6 713.6 L80.1 722.4 L82.7 712.7 L85.0 710.1 L86.8 711.0 L88.9 701.2 L91.0 695.1 L93.9 698.6 L96.0 706.5 L98.6 711.5 L102.2 714.0 L104.8 711.0 L106.9 706.9 L109.2 707.4 L111.0 705.7 L113.6 711.0 L117.2 715.4 L121.1 719.3 L124.2 714.5 L127.1 713.6 L129.5 718.0 L131.7 720.7 L134.5 727.7 L136.6 729.5 L139.3 734.5 L141.9 733.0 L143.5 730.3 L147.1 728.0 L149.7 729.4 L152.0 735.1 L155.0 737.4 L157.1 742.2 L159.8 743.0 L162.6 743.6 L164.7 748.0 L168.3 756.8 L172.7 762.7 L175.9 765.7 L177.5 760.9 L179.8 759.5 L182.0 756.3 L184.5 756.8 L186.8 763.0 L190.4 769.2 L193.0 775.4 L196.5 781.6 L198.7 781.6 L201.0 786.0 L204.0 789.5 L207.1 798.3 L210.3 805.4 L212.4 811.2 L215.1 806.3 L218.3 802.4 L221.0 803.6 L223.0 808.1 L226.2 813.4 L228.0 815.7 L229.8 813.4 L232.2 815.1 L235.4 811.6 L238.6 807.5 L242.1 807.5 L245.1 810.7 L248.1 814.2 L250.4 816.4 L251.7 805.4 L253.4 814.2 L255.2 812.5 L256.6 814.2 L258.7 809.8 L260.1 810.4 L261.9 807.2 L264.2 813.4 L267.2 815.7 L269.9 815.1 L271.0 813.5 L272.1 813.9 L273.2 813.2 L274.3 813.1 L275.4 812.7 L276.5 811.5 L277.6 811.0 L278.7 813.0 L279.8 813.7 L280.9 815.1 L282.0 817.6 L283.1 817.8 L284.2 819.0 L285.3 819.1 L286.4 819.9 L287.5 819.8 L288.6 820.9 L289.7 820.6 L290.8 819.6 L291.9 819.3 L293.0 818.6 L294.1 817.2 L295.2 817.6 L296.3 817.5 L297.4 818.3 L298.5 819.0 L299.6 821.4 L300.7 821.7 L301.8 822.1 L302.9 822.4 L304.0 822.3 L305.1 822.7 L306.2 822.0 L307.3 822.7 L308.4 822.3 L309.5 823.1 L310.6 823.2 L311.7 822.2 L312.8 822.0 L313.9 821.1 L315.0 821.2 L316.1 819.5 L317.2 819.5 L318.3 819.8 L319.4 820.9 L320.5 821.6 L321.6 822.2 L322.7 822.8 L323.8 823.2 L324.9 823.9 L326.0 824.0 L327.1 824.6 L328.2 823.6 L329.3 822.6 L330.4 820.9 L331.5 819.5 L332.6 820.9 L333.7 821.4 L334.8 821.7 L335.9 821.6 L337.0 822.1 L338.1 821.8 L339.2 823.1 L340.3 823.2 L341.4 823.3 L342.5 823.5 L343.6 825.1 L344.7 825.7 L345.8 824.3 L346.9 824.6 L348.0 823.3 L349.1 822.2 L350.2 821.7 L351.3 821.6 L352.4 821.0 L353.5 819.4 L354.6 820.9 L355.7 820.8 L356.8 822.4 L357.9 823.1 L359.0 825.5 L360.1 827.3 L361.2 828.2 L362.3 828.6 L363.4 826.0 L364.5 824.0 L365.6 824.1 L366.7 822.8 L367.8 822.6 L368.9 822.4 L370.0 822.2 L371.1 821.1 L372.2 820.5 L373.3 822.7 L374.4 822.9 L375.5 824.8 L376.6 825.7 L377.7 826.0 L378.8 826.5 L379.9 826.6 L381.0 826.9 L382.1 826.9 L383.2 826.3 L384.3 825.4 L385.4 824.8 L386.5 823.2 L387.6 822.1 L388.7 821.8 L389.8 821.6 L390.9 822.2 L392.0 823.7 L393.1 823.6 L394.2 824.8 L395.3 825.2 L396.4 827.0 L397.5 828.4 L398.6 827.1 L399.7 827.5 L400.8 827.0 L401.9 825.7 L403.0 826.0 L404.1 825.1 L405.2 824.7 L406.3 823.5 L407.4 823.3 L408.5 822.7 L409.6 822.8 L410.7 824.1 L411.8 825.8 L412.9 827.0 L414.0 826.8 L415.1 827.9 L416.2 827.9 L417.3 826.8 L418.4 826.2 L419.5 825.4 L420.6 824.7 L421.7 824.6 L422.8 824.3 L423.9 824.6 L425.0 825.3 L426.1 824.4 L427.2 825.3 L428.3 825.9 L429.4 825.7 L430.5 826.0 L431.6 827.2 L432.7 826.8 L433.8 827.0 L434.9 827.5 L436.0 828.0 L437.1 827.4 L438.2 827.8 L439.3 828.0 L440.4 828.4 L441.5 827.5 L442.6 827.7 L443.7 826.4 L444.8 826.3 L445.9 826.4 L447.0 826.4 L448.1 825.9 L449.2 825.7 L450.3 825.6 L451.4 826.3 L452.5 825.9 L453.6 826.8 L454.7 827.1 L455.8 826.8 L456.9 827.5 L458.0 828.9 L459.1 828.9 L460.2 828.4 L461.3 827.0 L462.4 825.9 L463.5 825.6 L464.6 826.6 L465.7 826.2 L466.8 826.5 L467.9 826.9 L469.0 827.2 L470.1 827.4 L471.2 828.2 L472.3 827.3 L473.4 827.3 L474.5 828.8 L475.6 828.8 L476.7 828.8 L477.8 827.8 L478.9 828.4 L480.0 828.0 L481.1 825.9 L482.2 825.8 L483.3 826.4 L484.4 826.5 L485.5 826.7 L486.6 826.7 L487.7 827.2 L488.8 827.6 L489.9 827.9 L491.0 829.3 L492.1 829.4 L493.2 830.1 L494.3 828.6 L495.4 829.4 L496.5 828.7 L497.6 828.7 L498.7 828.3 L499.8 828.1 L500.9 827.4 L502.0 826.4 L503.1 827.2 L504.2 826.2 L505.3 826.1 L506.4 826.9 L507.5 827.3 L508.6 827.8 L509.7 829.2 L510.8 829.4 L511.9 829.6 L513.0 828.6 L514.1 828.6 L515.2 827.7 L516.3 828.9 L517.4 829.0 L518.5 829.5 L519.6 830.4 L520.7 830.3 L521.8 828.8 L522.9 829.2 L524.0 828.8 L525.1 828.2 L526.2 827.6 L527.3 826.5 L528.4 828.0 L529.5 829.0 L530.6 828.6 L531.7 829.5 L532.8 830.2 L533.9 829.9 L535.0 829.1 L536.1 828.5 L537.2 828.2 L538.3 827.5 L539.4 827.9 L540.5 828.4 L541.6 828.8 L542.7 829.1 L543.8 830.4 L544.9 829.8 L546.0 828.4 L547.1 828.6 L548.2 828.4 L549.3 829.0 L550.4 829.6 L551.5 830.6 L552.6 830.7 L553.7 829.6 L554.8 828.6 L555.9 828.1 L557.0 827.4 L558.1 828.5 L559.2 829.3 L560.3 829.3 L561.4 829.2 L562.5 829.0 L563.6 828.9 L564.7 828.9 L565.8 828.8 L566.9 828.6 L568.0 829.6 L569.1 829.7 L570.2 829.8 L571.3 829.3 L572.4 829.0 L573.5 828.8 L574.6 828.0 L575.7 827.9 L576.8 827.8 L577.9 828.0 L579.0 829.0 L580.1 829.8 L581.2 829.4 L582.3 830.4 L583.4 830.8 L584.5 831.7 L585.6 832.2 L586.7 831.7 L587.8 832.8 L588.9 832.3 L590.0 830.9 L591.1 830.6 L592.2 829.6 L593.3 830.5 L594.4 830.6 L595.5 831.2 L596.6 831.3 L597.7 831.4 L598.8 831.8 L599.9 831.8 L601.0 831.4 L602.1 832.4 L603.2 831.9 L604.3 832.3 L605.4 833.0 L606.5 831.6 L607.6 831.2 L608.7 830.9 L609.8 831.6 L610.9 830.2 L612.0 829.6 L613.1 830.4 L614.2 829.0 L615.3 829.9 L616.4 830.2 L617.5 830.9 L618.6 831.6 L619.7 831.6 L620.8 832.2 L621.9 831.5 L623.0 832.9 L624.1 832.9 L625.2 832.8 L626.3 831.5 L627.4 832.0 L628.5 831.9 L629.6 830.3 L630.7 830.4 L631.8 830.5 L632.9 830.7 L634.0 829.6 L635.1 829.7 L636.2 830.3 L637.3 831.2 L638.4 831.8 L639.5 831.8 L640.6 832.1 L641.7 832.3 L642.8 832.3 L643.9 832.5 L645.0 832.2 L646.1 832.9 L647.2 833.1 L648.3 831.7 L649.4 831.6 L650.5 830.2 L651.6 831.0 L652.7 831.4 L653.8 831.6 L654.9 831.7 L656.0 832.0 L657.1 832.4 L658.2 832.4 L659.3 831.0 L660.4 830.5 L661.5 831.2 L662.6 832.0 L663.7 831.9 L664.8 832.3 L665.9 833.2 L667.0 832.3 L668.1 832.3 L669.2 832.1 L670.3 832.6 L671.4 832.1 L672.5 832.0 L673.6 832.8 L674.7 833.3 L675.8 832.5 L676.9 832.8 L678.0 831.6 L679.1 831.5 L680.2 830.4 L681.3 830.1 L682.4 831.3 L683.5 832.2 L684.6 834.0" stroke="#3030f0" stroke-width="0.9" fill="none" stroke-linejoin="round"/></svg>
<div class="jl" style="left:687px;top:596.6px;">Input</div>
<div class="jb" style="left:688.0px;top:607.0px;width:9.6px;height:9.6px;font-size:7.4px;line-height:7.6px;">1</div>
<div class="jb" style="left:699.7px;top:607.0px;width:9.6px;height:9.6px;font-size:7.4px;line-height:7.6px;">2</div>
<div class="jb" style="left:711.4px;top:607.0px;width:9.6px;height:9.6px;font-size:7.4px;line-height:7.6px;">3</div>
<div class="jb" style="left:723.1px;top:607.0px;width:9.6px;height:9.6px;font-size:7.4px;line-height:7.6px;">4</div>
<div class="jb" style="left:688.0px;top:618.3px;width:9.6px;height:9.6px;font-size:7.4px;line-height:7.6px;">5</div>
<div class="jb" style="left:699.7px;top:618.3px;width:9.6px;height:9.6px;font-size:7.4px;line-height:7.6px;">6</div>
<div class="jb" style="left:711.4px;top:618.3px;width:9.6px;height:9.6px;background:#00ff00;font-size:7.4px;line-height:7.6px;">7</div>
<div class="jb" style="left:723.1px;top:618.3px;width:9.6px;height:9.6px;font-size:7.4px;line-height:7.6px;">8</div>
<div class="jl" style="left:687px;top:633.7px;">Analyser</div>
<div class="jb" style="left:688px;top:644.2px;width:45px;height:9.3px;background:#ffff00;">Bandw</div>
<div class="jb" style="left:688px;top:654.8px;width:45px;height:9.3px;background:#00ff00;">Vid Av</div>
<div class="jb" style="left:688px;top:665.3px;width:45px;height:9.3px;">Pk Hold</div>
<div class="jb" style="left:688px;top:675.9px;width:45px;height:9.3px;">Freeze</div>
<div class="jl" style="left:687px;top:691.3px;">Markers</div>
<div class="jb" style="left:688px;top:701.0px;width:45px;height:9.3px;">Clear</div>
<div class="jb" style="left:688px;top:711.6px;width:45px;height:9.3px;">Peak</div>
<div class="jb" style="left:688px;top:722.1px;width:45px;height:9.3px;">Noise</div>
<div class="jl" style="left:687px;top:737.7px;">Frequency</div>
<div class="jb" style="left:688px;top:747.6px;width:45px;height:9.3px;">Min</div>
<div class="jb" style="left:688px;top:758.2px;width:45px;height:9.3px;">Max</div>
<div class="jb" style="left:688px;top:768.7px;width:45px;height:9.3px;">Cent</div>
<div class="jb" style="left:688px;top:779.2px;width:45px;height:9.3px;">Span</div>
<div class="jl" style="left:687px;top:795.0px;">Amplitude</div>
<div class="jb" style="left:688px;top:805.0px;width:45px;height:9.3px;">Max</div>
<div class="jb" style="left:688px;top:815.5px;width:45px;height:9.3px;">Range</div>
<div style="left:687.2px;top:840.2px;width:45.4px;height:11px;background:#e4e0d4;border-top:1px solid #6a6660;border-left:1px solid #6a6660;border-bottom:1px solid #fff;border-right:1px solid #fff;"></div>
<div class="t" style="left:689.6px;top:842.3px;font-size:7.4px;color:#111;letter-spacing:0.2px;">46.875</div>
<div class="jb" style="left:714px;top:854.2px;width:9px;height:8.4px;"></div>
<div class="jb" style="left:723px;top:854.2px;width:9px;height:8.4px;"></div>
<svg width="736" height="874"><path d="M720 856 l0 4.6 l-3.2 -2.3 z M726 856 l0 4.6 l3.2 -2.3 z" fill="#000"/></svg>
</body></html>
